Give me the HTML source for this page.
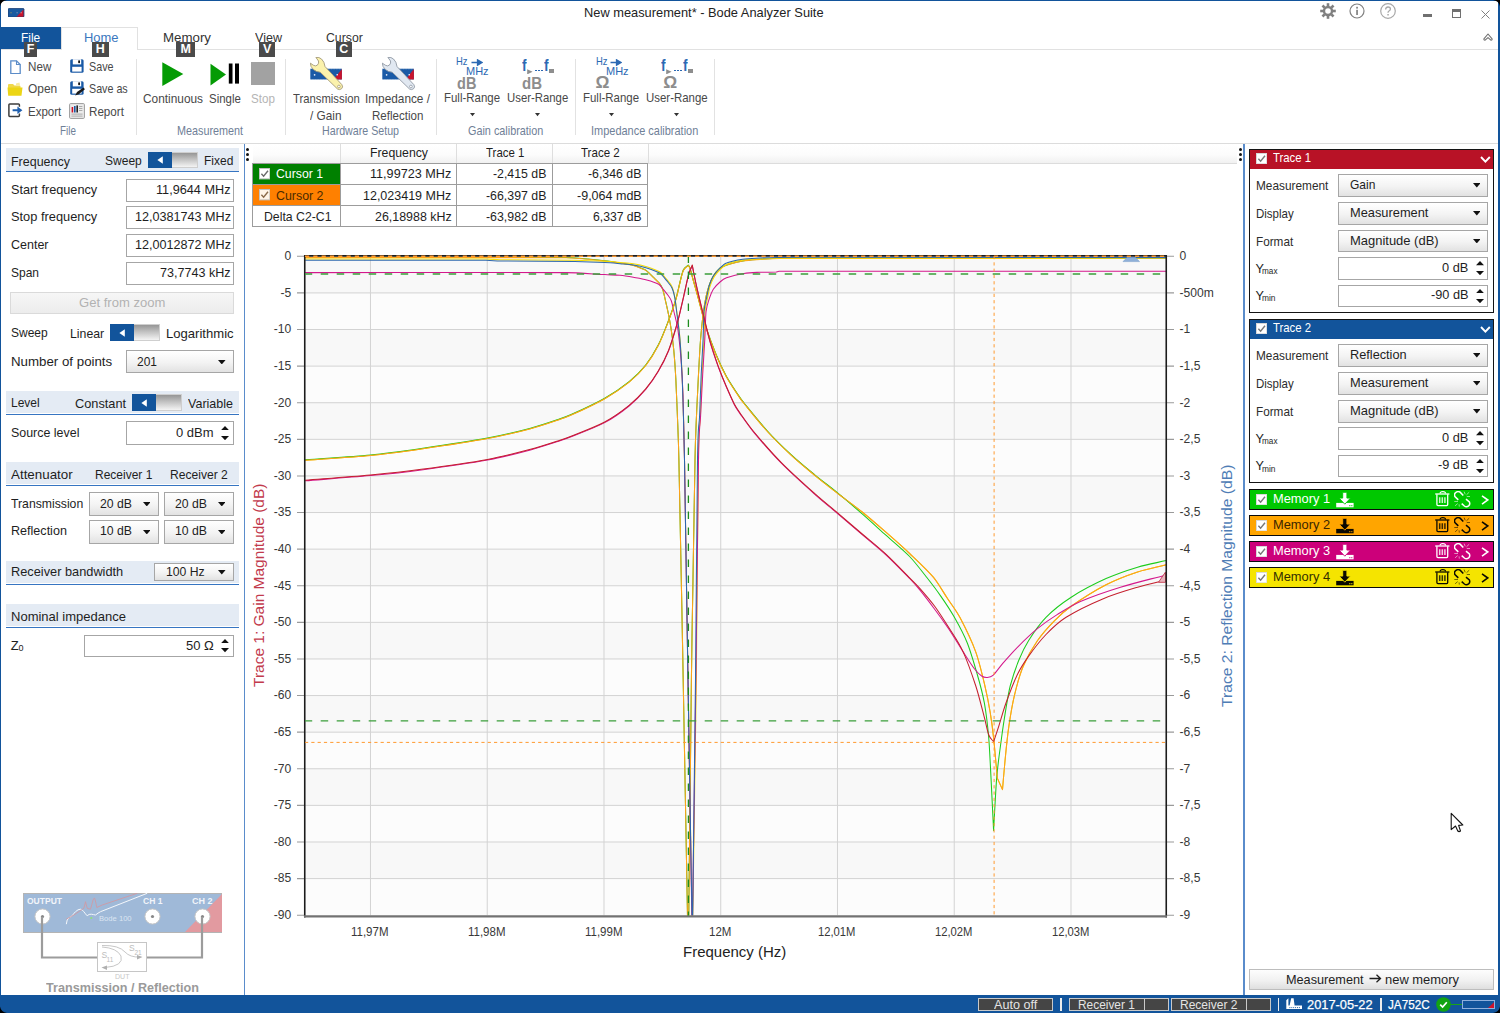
<!DOCTYPE html>
<html><head><meta charset="utf-8"><title>Bode Analyzer Suite</title><style>
html,body{margin:0;padding:0;background:#fff;}
body{width:1500px;height:1013px;position:relative;overflow:hidden;font-family:"Liberation Sans",sans-serif;}
.a{position:absolute;display:block;}
.t{position:absolute;white-space:nowrap;font-family:"Liberation Sans",sans-serif;}
</style></head>
<body>
<!-- p_top -->
<div class="t" style="left:584.40px;top:6.34px;font-size:13.30px;line-height:13.30px;color:#222;transform:scaleX(0.9647);transform-origin:0 0;">New measurement* - Bode Analyzer Suite</div>
<svg class="a" style="left:8.40px;top:7.70px;" width="16.2" height="9.5" viewBox="0 0 16 9"><rect width="16" height="9" rx="1" fill="#1a5aa0"/><path d="M8 9 L15.5 1 L15.5 8.5 Q15.5 9 15 9Z" fill="#c8142d"/><rect x="0.3" y="0.3" width="15.4" height="8.4" rx="1" fill="none" stroke="#1d3c6e" stroke-width="0.6"/><circle cx="3" cy="4.5" r="0.6" fill="#b9a24a"/><circle cx="9" cy="4.5" r="0.6" fill="#9fb0c8"/><circle cx="13" cy="4.5" r="0.6" fill="#e8c8c8"/></svg>
<svg class="a" style="left:1319.50px;top:3.00px;" width="16" height="16" viewBox="0 0 16 16"><g transform="translate(8,8)" fill="none" stroke="#808080"><circle r="4" stroke-width="2.4"/><rect x="-1.3" y="-7.8" width="2.6" height="3" fill="#808080" stroke="none" transform="rotate(0)"/><rect x="-1.3" y="-7.8" width="2.6" height="3" fill="#808080" stroke="none" transform="rotate(45)"/><rect x="-1.3" y="-7.8" width="2.6" height="3" fill="#808080" stroke="none" transform="rotate(90)"/><rect x="-1.3" y="-7.8" width="2.6" height="3" fill="#808080" stroke="none" transform="rotate(135)"/><rect x="-1.3" y="-7.8" width="2.6" height="3" fill="#808080" stroke="none" transform="rotate(180)"/><rect x="-1.3" y="-7.8" width="2.6" height="3" fill="#808080" stroke="none" transform="rotate(225)"/><rect x="-1.3" y="-7.8" width="2.6" height="3" fill="#808080" stroke="none" transform="rotate(270)"/><rect x="-1.3" y="-7.8" width="2.6" height="3" fill="#808080" stroke="none" transform="rotate(315)"/></g></svg>
<svg class="a" style="left:1349.00px;top:3.00px;" width="16" height="16" viewBox="0 0 16 16"><circle cx="8" cy="8" r="7" fill="none" stroke="#808080" stroke-width="1.2"/><rect x="7.2" y="6.8" width="1.7" height="5.2" fill="#808080"/><rect x="7.2" y="3.8" width="1.7" height="1.8" fill="#808080"/></svg>
<svg class="a" style="left:1379.60px;top:3.00px;" width="16" height="16" viewBox="0 0 16 16"><circle cx="8" cy="8" r="7.3" fill="none" stroke="#a8a8a8" stroke-width="1.2"/><path d="M5.6 6.4 Q5.6 4 8 4 Q10.4 4 10.4 6 Q10.4 7.3 9 8 Q8 8.6 8 9.8" fill="none" stroke="#a8a8a8" stroke-width="1.3"/><rect x="7.3" y="11" width="1.5" height="1.5" fill="#a8a8a8"/></svg>
<div class="a" style="left:1422.50px;top:14.20px;width:9.00px;height:2.40px;background:#707070;"></div>
<div class="a" style="left:1451.50px;top:8.50px;width:9.00px;height:9.00px;border:1px solid #707070;border-top:3px solid #707070;box-sizing:border-box;"></div>
<svg class="a" style="left:1481.00px;top:9.50px;" width="9" height="9" viewBox="0 0 9 9"><path d="M0.5 0.5 L8.5 8.5 M8.5 0.5 L0.5 8.5" stroke="#808080" stroke-width="1"/></svg>
<svg class="a" style="left:1483.00px;top:32.80px;" width="10" height="8.4" viewBox="0 0 10 8.4"><path d="M0.9 5.8 L5 1 L9.1 5.8 Q9.2 7.4 7.9 7.2 L5 4.6 L2.1 7.2 Q0.8 7.4 0.9 5.8Z" fill="#fff" stroke="#707070" stroke-width="1.1" stroke-linejoin="round"/></svg>
<div class="a" style="left:1.00px;top:48.60px;width:1498.00px;height:1.00px;background:#e1e1e1;"></div>
<div class="a" style="left:1.00px;top:26.60px;width:59.60px;height:22.90px;background:#12549b;"></div>
<div class="t" style="left:20.80px;top:30.84px;font-size:13.30px;line-height:13.30px;color:#fff;transform:scaleX(0.8960);transform-origin:0 0;">File</div>
<div class="a" style="left:61.30px;top:26.70px;width:77.00px;height:23.00px;background:#fff;border:1px solid #e1e1e1;border-bottom:none;box-sizing:border-box;"></div>
<div class="t" style="left:83.80px;top:30.84px;font-size:13.30px;line-height:13.30px;color:#3a77be;transform:scaleX(0.9725);transform-origin:0 0;">Home</div>
<div class="t" style="left:162.80px;top:30.84px;font-size:13.30px;line-height:13.30px;color:#333;transform:scaleX(0.9994);transform-origin:0 0;">Memory</div>
<div class="t" style="left:255.00px;top:30.84px;font-size:13.30px;line-height:13.30px;color:#333;transform:scaleX(0.9445);transform-origin:0 0;">View</div>
<div class="t" style="left:326.20px;top:30.84px;font-size:13.30px;line-height:13.30px;color:#333;transform:scaleX(0.9222);transform-origin:0 0;">Cursor</div>
<div class="a" style="left:23.70px;top:42.20px;width:13.80px;height:14.80px;background:#4a4a4a;"></div>
<div class="t" style="left:26.78px;top:43.42px;font-size:12.50px;line-height:12.50px;color:#fff;font-weight:bold;">F</div>
<div class="a" style="left:91.70px;top:42.20px;width:17.00px;height:14.80px;background:#4a4a4a;"></div>
<div class="t" style="left:95.69px;top:43.42px;font-size:12.50px;line-height:12.50px;color:#fff;font-weight:bold;">H</div>
<div class="a" style="left:176.20px;top:42.20px;width:19.10px;height:14.80px;background:#4a4a4a;"></div>
<div class="t" style="left:180.54px;top:43.42px;font-size:12.50px;line-height:12.50px;color:#fff;font-weight:bold;">M</div>
<div class="a" style="left:259.20px;top:42.20px;width:16.10px;height:14.80px;background:#4a4a4a;"></div>
<div class="t" style="left:263.08px;top:43.42px;font-size:12.50px;line-height:12.50px;color:#fff;font-weight:bold;">V</div>
<div class="a" style="left:335.80px;top:42.20px;width:15.90px;height:14.80px;background:#4a4a4a;"></div>
<div class="t" style="left:339.24px;top:43.42px;font-size:12.50px;line-height:12.50px;color:#fff;font-weight:bold;">C</div>
<div class="a" style="left:1.00px;top:142.60px;width:1498.00px;height:1.40px;background:#dcdcdc;"></div>
<div class="a" style="left:135.80px;top:59.00px;width:1.00px;height:76.00px;background:#e2e2e2;"></div>
<div class="a" style="left:284.80px;top:59.00px;width:1.00px;height:76.00px;background:#e2e2e2;"></div>
<div class="a" style="left:435.90px;top:59.00px;width:1.00px;height:76.00px;background:#e2e2e2;"></div>
<div class="a" style="left:574.90px;top:59.00px;width:1.00px;height:76.00px;background:#e2e2e2;"></div>
<div class="a" style="left:713.90px;top:59.00px;width:1.00px;height:76.00px;background:#e2e2e2;"></div>
<div class="t" style="left:28.00px;top:60.30px;font-size:13.00px;line-height:13.00px;color:#484848;transform:scaleX(0.8959);transform-origin:0 0;">New</div>
<div class="t" style="left:27.50px;top:82.30px;font-size:13.00px;line-height:13.00px;color:#484848;transform:scaleX(0.9183);transform-origin:0 0;">Open</div>
<div class="t" style="left:28.00px;top:104.50px;font-size:13.00px;line-height:13.00px;color:#484848;transform:scaleX(0.8863);transform-origin:0 0;">Export</div>
<div class="t" style="left:88.80px;top:60.30px;font-size:13.00px;line-height:13.00px;color:#484848;transform:scaleX(0.8269);transform-origin:0 0;">Save</div>
<div class="t" style="left:88.80px;top:82.30px;font-size:13.00px;line-height:13.00px;color:#484848;transform:scaleX(0.8239);transform-origin:0 0;">Save as</div>
<div class="t" style="left:88.80px;top:104.50px;font-size:13.00px;line-height:13.00px;color:#484848;transform:scaleX(0.8945);transform-origin:0 0;">Report</div>
<div class="t" style="left:60.30px;top:124.67px;font-size:12.20px;line-height:12.20px;color:#6f8097;transform:scaleX(0.8089);transform-origin:0 0;">File</div>
<div class="t" style="left:177.20px;top:124.67px;font-size:12.20px;line-height:12.20px;color:#6f8097;transform:scaleX(0.8863);transform-origin:0 0;">Measurement</div>
<div class="t" style="left:321.70px;top:124.67px;font-size:12.20px;line-height:12.20px;color:#6f8097;transform:scaleX(0.8746);transform-origin:0 0;">Hardware Setup</div>
<div class="t" style="left:467.60px;top:124.67px;font-size:12.20px;line-height:12.20px;color:#6f8097;transform:scaleX(0.8895);transform-origin:0 0;">Gain calibration</div>
<div class="t" style="left:590.60px;top:124.67px;font-size:12.20px;line-height:12.20px;color:#6f8097;transform:scaleX(0.8999);transform-origin:0 0;">Impedance calibration</div>
<svg class="a" style="left:10.00px;top:59.50px;" width="11" height="14.5" viewBox="0 0 11 14.5"><path d="M0.8 0.8 H6.5 L10.2 4.5 V13.7 H0.8Z" fill="#fff" stroke="#5b8cc8" stroke-width="1.3"/><path d="M6.5 0.8 V4.5 H10.2" fill="none" stroke="#5b8cc8" stroke-width="1.1"/></svg>
<svg class="a" style="left:7.00px;top:81.50px;" width="16" height="14.5" viewBox="0 0 16 14.5"><path d="M1 3 Q1 2 2 2 H6 L7.5 3.5 H12.5 Q13.5 3.5 13.5 4.5 V6 H1Z" fill="#f0d84a"/><path d="M9 1.5 L12.5 0.6 L13 3.5 H9Z" fill="#f7eaa0"/><path d="M0.5 5.5 H15.5 L14.5 13.8 H1.2Z" fill="#ecd515"/></svg>
<svg class="a" style="left:8.00px;top:103.40px;" width="15" height="15" viewBox="0 0 15 15"><path d="M11.4 3.8 V1.8 Q11.4 0.9 10.5 0.9 H1.8 Q0.9 0.9 0.9 1.8 V12.6 Q0.9 13.5 1.8 13.5 H10.5 Q11.4 13.5 11.4 12.6 V10.6" fill="none" stroke="#3c3c3c" stroke-width="1.5"/><path d="M4.6 6.2 H9.4 V3.4 L14.4 7.2 L9.4 11 V8.2 H4.6Z" fill="#1f5fae"/></svg>
<svg class="a" style="left:69.70px;top:59.40px;" width="15" height="15" viewBox="0 0 15 15"><rect x="0.2" y="0.2" width="13.4" height="13.6" rx="1.6" fill="#1a5aa6"/><rect x="2.8" y="0.2" width="8.4" height="5.2" fill="#fff"/><rect x="8.2" y="1.2" width="1.8" height="3" rx="0.8" fill="#111"/><rect x="2.2" y="7.8" width="9.4" height="4.8" fill="#fff"/></svg>
<svg class="a" style="left:69.70px;top:81.40px;" width="15" height="15" viewBox="0 0 15 15"><rect x="0.2" y="0.2" width="13.4" height="13.6" rx="1.6" fill="#1a5aa6"/><rect x="2.8" y="0.2" width="8.4" height="5.2" fill="#fff"/><rect x="8.2" y="1.2" width="1.8" height="3" rx="0.8" fill="#111"/><rect x="2.2" y="7.8" width="9.4" height="4.8" fill="#fff"/><path d="M5.2 14.6 L7 11 L13.6 6.6 L14.9 8.2 L8.8 13.2Z" fill="#1a1a1a"/></svg>
<svg class="a" style="left:68.70px;top:102.80px;" width="16" height="16" viewBox="0 0 16 16"><rect x="0.6" y="0.6" width="14.8" height="14.8" rx="1" fill="#ececec" stroke="#9a9a9a" stroke-width="1"/><rect x="2.6" y="4" width="1.6" height="5.5" fill="#d01025"/><rect x="5" y="3" width="1.6" height="6.5" fill="#1a5aa6"/><rect x="7.4" y="2.4" width="1.6" height="7.1" fill="#222"/><rect x="10" y="3" width="3.4" height="1" fill="#aaa"/><rect x="10" y="5" width="3.4" height="1" fill="#aaa"/><rect x="10" y="7" width="3.4" height="1" fill="#aaa"/><rect x="2.4" y="10.6" width="11.2" height="1" fill="#aaa"/><rect x="2.4" y="12.6" width="11.2" height="1" fill="#aaa"/></svg>
<svg class="a" style="left:162.00px;top:61.50px;" width="22" height="24.5" viewBox="0 0 22 24.5"><path d="M0.3 0.3 L21.3 12 L0.3 23.9Z" fill="#049b04"/></svg>
<svg class="a" style="left:210.00px;top:63.00px;" width="30" height="23" viewBox="0 0 30 23"><path d="M0.5 0.8 L16 11.5 L0.5 22.4Z" fill="#049b04"/><rect x="18.8" y="0.5" width="3.7" height="20.1" fill="#000"/><rect x="25" y="0.5" width="4" height="20.1" fill="#000"/></svg>
<div class="a" style="left:250.80px;top:61.80px;width:23.90px;height:23.50px;background:#a2a2a2;"></div>
<div class="t" style="left:143.00px;top:92.00px;font-size:13.00px;line-height:13.00px;color:#484848;transform:scaleX(0.9124);transform-origin:0 0;">Continuous</div>
<div class="t" style="left:208.70px;top:92.00px;font-size:13.00px;line-height:13.00px;color:#484848;transform:scaleX(0.8800);transform-origin:0 0;">Single</div>
<div class="t" style="left:250.80px;top:92.00px;font-size:13.00px;line-height:13.00px;color:#b4b4b4;transform:scaleX(0.8937);transform-origin:0 0;">Stop</div>
<svg class="a" style="left:309.70px;top:57.00px;" width="34" height="34" viewBox="0 0 34 34"><rect x="0.3" y="11.7" width="31.6" height="10.8" fill="#1a5aa6"/><path d="M31.9 12 V22.5 H23.6 Z" fill="#c8142d"/><path d="M0.3 11.9 H31.9" stroke="#fff" stroke-width="0.6" stroke-dasharray="0.8 0.8" opacity="0.55"/><path d="M0.3 22.4 H31.9" stroke="#fff" stroke-width="0.5" stroke-dasharray="0.8 0.8" opacity="0.45"/><circle cx="4.6" cy="17.8" r="0.85" fill="#e8eef8"/><circle cx="22.4" cy="17.5" r="0.6" fill="#8fb0dc"/><circle cx="27.2" cy="17.8" r="0.8" fill="#fff"/><path d="M5.9 0.4 Q9 -0.2 11.5 2 Q14.5 4.8 15 9.5 L31.9 27.7 Q33.5 30 31.5 31.8 Q29.5 33.3 27.5 32 L10.2 15.2 Q6 15 3.5 12.6 Q0.3 9.8 0.3 6.1 L3.3 8.2 Q5.5 9.6 7.3 8.2 Q9.3 6.2 8.5 4 Z" fill="#fbf2ac" stroke="#a49a78" stroke-width="0.9" stroke-linejoin="round"/><circle cx="28.9" cy="29.5" r="1.35" fill="#fff" stroke="#a49a78" stroke-width="0.8"/></svg>
<svg class="a" style="left:381.70px;top:57.00px;" width="34" height="34" viewBox="0 0 34 34"><rect x="0.3" y="11.7" width="31.6" height="10.8" fill="#1a5aa6"/><path d="M31.9 12 V22.5 H23.6 Z" fill="#c8142d"/><path d="M0.3 11.9 H31.9" stroke="#fff" stroke-width="0.6" stroke-dasharray="0.8 0.8" opacity="0.55"/><path d="M0.3 22.4 H31.9" stroke="#fff" stroke-width="0.5" stroke-dasharray="0.8 0.8" opacity="0.45"/><circle cx="4.6" cy="17.8" r="0.85" fill="#e8eef8"/><circle cx="22.4" cy="17.5" r="0.6" fill="#8fb0dc"/><circle cx="27.2" cy="17.8" r="0.8" fill="#fff"/><path d="M5.9 0.4 Q9 -0.2 11.5 2 Q14.5 4.8 15 9.5 L31.9 27.7 Q33.5 30 31.5 31.8 Q29.5 33.3 27.5 32 L10.2 15.2 Q6 15 3.5 12.6 Q0.3 9.8 0.3 6.1 L3.3 8.2 Q5.5 9.6 7.3 8.2 Q9.3 6.2 8.5 4 Z" fill="#e1e8f1" stroke="#9098a4" stroke-width="0.9" stroke-linejoin="round"/><circle cx="28.9" cy="29.5" r="1.35" fill="#fff" stroke="#9098a4" stroke-width="0.8"/></svg>
<div class="t" style="left:292.50px;top:92.00px;font-size:13.00px;line-height:13.00px;color:#484848;transform:scaleX(0.8684);transform-origin:0 0;">Transmission</div>
<div class="t" style="left:309.70px;top:108.50px;font-size:13.00px;line-height:13.00px;color:#484848;transform:scaleX(0.9083);transform-origin:0 0;">/ Gain</div>
<div class="t" style="left:365.00px;top:92.00px;font-size:13.00px;line-height:13.00px;color:#484848;transform:scaleX(0.9086);transform-origin:0 0;">Impedance /</div>
<div class="t" style="left:372.00px;top:108.50px;font-size:13.00px;line-height:13.00px;color:#484848;transform:scaleX(0.8875);transform-origin:0 0;">Reflection</div>
<div class="t" style="left:456.40px;top:56.11px;font-size:10.50px;line-height:10.50px;color:#2b69b3;transform:scaleX(0.8961);transform-origin:0 0;">Hz</div>
<div class="t" style="left:466.40px;top:66.11px;font-size:10.50px;line-height:10.50px;color:#2b69b3;transform:scaleX(1.0473);transform-origin:0 0;">MHz</div>
<svg class="a" style="left:470.90px;top:58.50px;" width="12" height="7" viewBox="0 0 12 7"><path d="M0.5 3.5 H8 M6.5 0.8 L11 3.5 L6.5 6.2Z" stroke="#2b69b3" stroke-width="1.3" fill="#2b69b3"/></svg>
<div class="t" style="left:595.60px;top:56.11px;font-size:10.50px;line-height:10.50px;color:#2b69b3;transform:scaleX(0.8961);transform-origin:0 0;">Hz</div>
<div class="t" style="left:605.60px;top:66.11px;font-size:10.50px;line-height:10.50px;color:#2b69b3;transform:scaleX(1.0473);transform-origin:0 0;">MHz</div>
<svg class="a" style="left:610.10px;top:58.50px;" width="12" height="7" viewBox="0 0 12 7"><path d="M0.5 3.5 H8 M6.5 0.8 L11 3.5 L6.5 6.2Z" stroke="#2b69b3" stroke-width="1.3" fill="#2b69b3"/></svg>
<div class="t" style="left:522.30px;top:57.11px;font-size:17.00px;line-height:17.00px;color:#2b69b3;transform:scaleX(0.8127);transform-origin:0 0;font-weight:bold;">f</div>
<div class="t" style="left:544.40px;top:57.11px;font-size:17.00px;line-height:17.00px;color:#2b69b3;transform:scaleX(0.8127);transform-origin:0 0;font-weight:bold;">f</div>
<svg class="a" style="left:526.70px;top:68.80px;" width="6" height="5.6" viewBox="0 0 6 5.6"><path d="M0.2 0.2 L5.6 2.8 L0.2 5.4Z" fill="#8e8e8e"/></svg>
<div class="a" style="left:534.90px;top:69.60px;width:1.80px;height:1.80px;background:#2b69b3;"></div>
<div class="a" style="left:537.90px;top:69.60px;width:1.80px;height:1.80px;background:#2b69b3;"></div>
<div class="a" style="left:540.90px;top:69.60px;width:1.80px;height:1.80px;background:#2b69b3;"></div>
<div class="a" style="left:549.40px;top:68.90px;width:4.40px;height:4.30px;background:#8e8e8e;"></div>
<div class="t" style="left:661.30px;top:57.11px;font-size:17.00px;line-height:17.00px;color:#2b69b3;transform:scaleX(0.8127);transform-origin:0 0;font-weight:bold;">f</div>
<div class="t" style="left:683.40px;top:57.11px;font-size:17.00px;line-height:17.00px;color:#2b69b3;transform:scaleX(0.8127);transform-origin:0 0;font-weight:bold;">f</div>
<svg class="a" style="left:665.70px;top:68.80px;" width="6" height="5.6" viewBox="0 0 6 5.6"><path d="M0.2 0.2 L5.6 2.8 L0.2 5.4Z" fill="#8e8e8e"/></svg>
<div class="a" style="left:673.90px;top:69.60px;width:1.80px;height:1.80px;background:#2b69b3;"></div>
<div class="a" style="left:676.90px;top:69.60px;width:1.80px;height:1.80px;background:#2b69b3;"></div>
<div class="a" style="left:679.90px;top:69.60px;width:1.80px;height:1.80px;background:#2b69b3;"></div>
<div class="a" style="left:688.40px;top:68.90px;width:4.40px;height:4.30px;background:#8e8e8e;"></div>
<div class="t" style="left:456.60px;top:75.66px;font-size:16.00px;line-height:16.00px;color:#8d8d8d;transform:scaleX(0.9096);transform-origin:0 0;font-weight:bold;">dB</div>
<div class="t" style="left:521.80px;top:75.66px;font-size:16.00px;line-height:16.00px;color:#8d8d8d;transform:scaleX(0.9378);transform-origin:0 0;font-weight:bold;">dB</div>
<div class="t" style="left:595.60px;top:74.27px;font-size:17.40px;line-height:17.40px;color:#8d8d8d;font-weight:bold;">Ω</div>
<div class="t" style="left:663.20px;top:74.27px;font-size:17.40px;line-height:17.40px;color:#8d8d8d;font-weight:bold;">Ω</div>
<div class="t" style="left:444.40px;top:91.40px;font-size:13.00px;line-height:13.00px;color:#484848;transform:scaleX(0.8808);transform-origin:0 0;">Full-Range</div>
<div class="t" style="left:507.40px;top:91.40px;font-size:13.00px;line-height:13.00px;color:#484848;transform:scaleX(0.8733);transform-origin:0 0;">User-Range</div>
<div class="t" style="left:583.40px;top:91.40px;font-size:13.00px;line-height:13.00px;color:#484848;transform:scaleX(0.8808);transform-origin:0 0;">Full-Range</div>
<div class="t" style="left:646.40px;top:91.40px;font-size:13.00px;line-height:13.00px;color:#484848;transform:scaleX(0.8790);transform-origin:0 0;">User-Range</div>
<svg class="a" style="left:469.70px;top:113.30px;" width="5" height="3.4" viewBox="0 0 5 3.4"><path d="M0 0 H5 L2.5 3.2Z" fill="#333"/></svg>
<svg class="a" style="left:535.00px;top:113.30px;" width="5" height="3.4" viewBox="0 0 5 3.4"><path d="M0 0 H5 L2.5 3.2Z" fill="#333"/></svg>
<svg class="a" style="left:609.00px;top:113.30px;" width="5" height="3.4" viewBox="0 0 5 3.4"><path d="M0 0 H5 L2.5 3.2Z" fill="#333"/></svg>
<svg class="a" style="left:674.00px;top:113.30px;" width="5" height="3.4" viewBox="0 0 5 3.4"><path d="M0 0 H5 L2.5 3.2Z" fill="#333"/></svg>
<!-- p_left -->
<div class="a" style="left:243.50px;top:143.50px;width:1.40px;height:852.00px;background:#5a8ccb;"></div>
<div class="a" style="left:5.50px;top:148.30px;width:233.20px;height:22.30px;background:#e4ebf4;"></div>
<div class="a" style="left:5.50px;top:170.60px;width:233.20px;height:1.30px;background:#3675c2;"></div>
<div class="t" style="left:10.80px;top:154.80px;font-size:13.00px;line-height:13.00px;color:#1e1e1e;transform:scaleX(0.9591);transform-origin:0 0;">Frequency</div>
<div class="t" style="left:104.50px;top:154.40px;font-size:13.00px;line-height:13.00px;color:#1e1e1e;transform:scaleX(0.9258);transform-origin:0 0;">Sweep</div>
<div class="a" style="left:147.80px;top:151.70px;width:50.00px;height:16.50px;background:linear-gradient(#969696,#bdbdbd 40%,#f4f4f4);border:1px solid #cfcfcf;box-sizing:border-box;"></div>
<div class="a" style="left:147.80px;top:151.70px;width:24.70px;height:16.50px;background:#12549b;"></div>
<svg class="a" style="left:157.20px;top:156.10px;" width="6.4" height="8" viewBox="0 0 6.4 8"><path d="M5.8 0.2 V7.8 L0.4 4Z" fill="#fff"/></svg>
<div class="t" style="left:204.00px;top:154.40px;font-size:13.00px;line-height:13.00px;color:#1e1e1e;transform:scaleX(0.9218);transform-origin:0 0;">Fixed</div>
<div class="a" style="left:125.80px;top:178.80px;width:108.00px;height:23.00px;background:#fff;border:1px solid #a6a6a6;box-sizing:border-box;"></div>
<div class="t" style="left:10.80px;top:182.70px;font-size:13.00px;line-height:13.00px;color:#1e1e1e;transform:scaleX(0.9779);transform-origin:0 0;">Start frequency</div>
<div class="t" style="left:156.00px;top:182.70px;font-size:13.00px;line-height:13.00px;color:#1e1e1e;transform:scaleX(0.9758);transform-origin:0 0;">11,9644 MHz</div>
<div class="a" style="left:125.80px;top:206.40px;width:108.00px;height:23.00px;background:#fff;border:1px solid #a6a6a6;box-sizing:border-box;"></div>
<div class="t" style="left:10.80px;top:210.30px;font-size:13.00px;line-height:13.00px;color:#1e1e1e;transform:scaleX(0.9858);transform-origin:0 0;">Stop frequency</div>
<div class="t" style="left:134.50px;top:210.30px;font-size:13.00px;line-height:13.00px;color:#1e1e1e;transform:scaleX(0.9697);transform-origin:0 0;">12,0381743 MHz</div>
<div class="a" style="left:125.80px;top:234.10px;width:108.00px;height:23.00px;background:#fff;border:1px solid #a6a6a6;box-sizing:border-box;"></div>
<div class="t" style="left:10.80px;top:238.00px;font-size:13.00px;line-height:13.00px;color:#1e1e1e;transform:scaleX(0.9611);transform-origin:0 0;">Center</div>
<div class="t" style="left:134.50px;top:238.00px;font-size:13.00px;line-height:13.00px;color:#1e1e1e;transform:scaleX(0.9697);transform-origin:0 0;">12,0012872 MHz</div>
<div class="a" style="left:125.80px;top:261.80px;width:108.00px;height:23.00px;background:#fff;border:1px solid #a6a6a6;box-sizing:border-box;"></div>
<div class="t" style="left:10.80px;top:265.70px;font-size:13.00px;line-height:13.00px;color:#1e1e1e;transform:scaleX(0.9223);transform-origin:0 0;">Span</div>
<div class="t" style="left:160.00px;top:265.70px;font-size:13.00px;line-height:13.00px;color:#1e1e1e;transform:scaleX(0.9659);transform-origin:0 0;">73,7743 kHz</div>
<div class="a" style="left:10.40px;top:292.00px;width:223.40px;height:21.80px;background:linear-gradient(#f6f6f6,#ececec);border:1px solid #dadada;box-sizing:border-box;"></div>
<div class="t" style="left:78.70px;top:296.30px;font-size:13.00px;line-height:13.00px;color:#b2b2b2;transform:scaleX(1.0039);transform-origin:0 0;">Get from zoom</div>
<div class="t" style="left:10.80px;top:326.00px;font-size:13.00px;line-height:13.00px;color:#1e1e1e;transform:scaleX(0.9233);transform-origin:0 0;">Sweep</div>
<div class="t" style="left:69.50px;top:326.60px;font-size:13.00px;line-height:13.00px;color:#1e1e1e;transform:scaleX(0.9465);transform-origin:0 0;">Linear</div>
<div class="a" style="left:109.50px;top:324.20px;width:50.00px;height:16.50px;background:linear-gradient(#969696,#bdbdbd 40%,#f4f4f4);border:1px solid #cfcfcf;box-sizing:border-box;"></div>
<div class="a" style="left:109.50px;top:324.20px;width:24.70px;height:16.50px;background:#12549b;"></div>
<svg class="a" style="left:118.90px;top:328.60px;" width="6.4" height="8" viewBox="0 0 6.4 8"><path d="M5.8 0.2 V7.8 L0.4 4Z" fill="#fff"/></svg>
<div class="t" style="left:166.20px;top:326.60px;font-size:13.00px;line-height:13.00px;color:#1e1e1e;transform:scaleX(1.0061);transform-origin:0 0;">Logarithmic</div>
<div class="t" style="left:10.80px;top:355.20px;font-size:13.00px;line-height:13.00px;color:#1e1e1e;transform:scaleX(1.0224);transform-origin:0 0;">Number of points</div>
<div class="a" style="left:125.80px;top:350.30px;width:108.00px;height:23.00px;background:linear-gradient(#ffffff,#f3f3f3 55%,#e2e2e2);border:1px solid #a6a6a6;box-sizing:border-box;"></div>
<div class="t" style="left:136.70px;top:355.20px;font-size:13.00px;line-height:13.00px;color:#1e1e1e;transform:scaleX(0.9222);transform-origin:0 0;">201</div>
<svg class="a" style="left:218.30px;top:359.60px;" width="7.6" height="4.6" viewBox="0 0 7.6 4.6"><path d="M0 0 H7.6 L3.8 4.4Z" fill="#111"/></svg>
<div class="a" style="left:5.50px;top:391.20px;width:233.20px;height:22.30px;background:#e4ebf4;"></div>
<div class="a" style="left:5.50px;top:413.50px;width:233.20px;height:1.30px;background:#3675c2;"></div>
<div class="t" style="left:10.80px;top:396.30px;font-size:13.00px;line-height:13.00px;color:#1e1e1e;transform:scaleX(0.9235);transform-origin:0 0;">Level</div>
<div class="t" style="left:74.70px;top:397.00px;font-size:13.00px;line-height:13.00px;color:#1e1e1e;transform:scaleX(0.9822);transform-origin:0 0;">Constant</div>
<div class="a" style="left:131.70px;top:394.20px;width:50.00px;height:16.50px;background:linear-gradient(#969696,#bdbdbd 40%,#f4f4f4);border:1px solid #cfcfcf;box-sizing:border-box;"></div>
<div class="a" style="left:131.70px;top:394.20px;width:24.70px;height:16.50px;background:#12549b;"></div>
<svg class="a" style="left:141.10px;top:398.60px;" width="6.4" height="8" viewBox="0 0 6.4 8"><path d="M5.8 0.2 V7.8 L0.4 4Z" fill="#fff"/></svg>
<div class="t" style="left:188.30px;top:397.00px;font-size:13.00px;line-height:13.00px;color:#1e1e1e;transform:scaleX(0.9630);transform-origin:0 0;">Variable</div>
<div class="t" style="left:10.80px;top:425.70px;font-size:13.00px;line-height:13.00px;color:#1e1e1e;transform:scaleX(0.9562);transform-origin:0 0;">Source level</div>
<div class="a" style="left:125.80px;top:421.30px;width:108.00px;height:23.40px;background:#fff;border:1px solid #a6a6a6;box-sizing:border-box;"></div>
<div class="t" style="left:175.80px;top:425.70px;font-size:13.00px;line-height:13.00px;color:#1e1e1e;transform:scaleX(0.9981);transform-origin:0 0;">0 dBm</div>
<svg class="a" style="left:220.80px;top:426.10px;" width="8" height="4.4" viewBox="0 0 8 4.4"><path d="M0 4.2 H8 L4 0Z" fill="#111"/></svg>
<svg class="a" style="left:220.80px;top:435.90px;" width="8" height="4.4" viewBox="0 0 8 4.4"><path d="M0 0 H8 L4 4.2Z" fill="#111"/></svg>
<div class="a" style="left:5.50px;top:462.20px;width:233.20px;height:22.30px;background:#e4ebf4;"></div>
<div class="a" style="left:5.50px;top:484.50px;width:233.20px;height:1.30px;background:#3675c2;"></div>
<div class="t" style="left:10.80px;top:467.50px;font-size:13.00px;line-height:13.00px;color:#1e1e1e;transform:scaleX(1.0287);transform-origin:0 0;">Attenuator</div>
<div class="t" style="left:94.70px;top:467.50px;font-size:13.00px;line-height:13.00px;color:#1e1e1e;transform:scaleX(0.9222);transform-origin:0 0;">Receiver 1</div>
<div class="t" style="left:169.70px;top:467.50px;font-size:13.00px;line-height:13.00px;color:#1e1e1e;transform:scaleX(0.9302);transform-origin:0 0;">Receiver 2</div>
<div class="t" style="left:10.80px;top:496.50px;font-size:13.00px;line-height:13.00px;color:#1e1e1e;transform:scaleX(0.9400);transform-origin:0 0;">Transmission</div>
<div class="t" style="left:10.80px;top:524.30px;font-size:13.00px;line-height:13.00px;color:#1e1e1e;transform:scaleX(0.9670);transform-origin:0 0;">Reflection</div>
<div class="a" style="left:88.70px;top:492.20px;width:70.00px;height:23.70px;background:linear-gradient(#ffffff,#f3f3f3 55%,#e2e2e2);border:1px solid #a6a6a6;box-sizing:border-box;"></div>
<div class="t" style="left:99.70px;top:496.50px;font-size:13.00px;line-height:13.00px;color:#1e1e1e;transform:scaleX(0.9420);transform-origin:0 0;">20 dB</div>
<svg class="a" style="left:142.80px;top:501.85px;" width="7.6" height="4.6" viewBox="0 0 7.6 4.6"><path d="M0 0 H7.6 L3.8 4.4Z" fill="#111"/></svg>
<div class="a" style="left:163.70px;top:492.20px;width:70.10px;height:23.70px;background:linear-gradient(#ffffff,#f3f3f3 55%,#e2e2e2);border:1px solid #a6a6a6;box-sizing:border-box;"></div>
<div class="t" style="left:174.70px;top:496.50px;font-size:13.00px;line-height:13.00px;color:#1e1e1e;transform:scaleX(0.9420);transform-origin:0 0;">20 dB</div>
<svg class="a" style="left:217.80px;top:501.85px;" width="7.6" height="4.6" viewBox="0 0 7.6 4.6"><path d="M0 0 H7.6 L3.8 4.4Z" fill="#111"/></svg>
<div class="a" style="left:88.70px;top:520.00px;width:70.00px;height:23.70px;background:linear-gradient(#ffffff,#f3f3f3 55%,#e2e2e2);border:1px solid #a6a6a6;box-sizing:border-box;"></div>
<div class="t" style="left:99.70px;top:524.30px;font-size:13.00px;line-height:13.00px;color:#1e1e1e;transform:scaleX(0.9420);transform-origin:0 0;">10 dB</div>
<svg class="a" style="left:142.80px;top:529.65px;" width="7.6" height="4.6" viewBox="0 0 7.6 4.6"><path d="M0 0 H7.6 L3.8 4.4Z" fill="#111"/></svg>
<div class="a" style="left:163.70px;top:520.00px;width:70.10px;height:23.70px;background:linear-gradient(#ffffff,#f3f3f3 55%,#e2e2e2);border:1px solid #a6a6a6;box-sizing:border-box;"></div>
<div class="t" style="left:174.70px;top:524.30px;font-size:13.00px;line-height:13.00px;color:#1e1e1e;transform:scaleX(0.9420);transform-origin:0 0;">10 dB</div>
<svg class="a" style="left:217.80px;top:529.65px;" width="7.6" height="4.6" viewBox="0 0 7.6 4.6"><path d="M0 0 H7.6 L3.8 4.4Z" fill="#111"/></svg>
<div class="a" style="left:5.50px;top:561.20px;width:233.20px;height:22.30px;background:#e4ebf4;"></div>
<div class="a" style="left:5.50px;top:583.50px;width:233.20px;height:1.30px;background:#3675c2;"></div>
<div class="t" style="left:10.80px;top:565.30px;font-size:13.00px;line-height:13.00px;color:#1e1e1e;transform:scaleX(0.9828);transform-origin:0 0;">Receiver bandwidth</div>
<div class="a" style="left:153.70px;top:563.30px;width:80.00px;height:18.00px;background:linear-gradient(#ffffff,#f3f3f3 55%,#e2e2e2);border:1px solid #a6a6a6;box-sizing:border-box;"></div>
<div class="t" style="left:165.50px;top:565.30px;font-size:13.00px;line-height:13.00px;color:#1e1e1e;transform:scaleX(0.9396);transform-origin:0 0;">100 Hz</div>
<svg class="a" style="left:218.30px;top:570.10px;" width="7.6" height="4.6" viewBox="0 0 7.6 4.6"><path d="M0 0 H7.6 L3.8 4.4Z" fill="#111"/></svg>
<div class="a" style="left:5.50px;top:604.20px;width:233.20px;height:22.30px;background:#e4ebf4;"></div>
<div class="a" style="left:5.50px;top:626.50px;width:233.20px;height:1.30px;background:#3675c2;"></div>
<div class="t" style="left:10.80px;top:609.50px;font-size:13.00px;line-height:13.00px;color:#1e1e1e;transform:scaleX(1.0010);transform-origin:0 0;">Nominal impedance</div>
<div class="a" style="left:83.70px;top:634.50px;width:150.00px;height:22.30px;background:#fff;border:1px solid #a6a6a6;box-sizing:border-box;"></div>
<div class="t" style="left:10.80px;top:639.00px;font-size:13.00px;line-height:13.00px;color:#1e1e1e;">Z</div>
<div class="t" style="left:18.60px;top:643.58px;font-size:9.00px;line-height:9.00px;color:#1e1e1e;">0</div>
<div class="t" style="left:185.50px;top:639.00px;font-size:13.00px;line-height:13.00px;color:#1e1e1e;transform:scaleX(1.0004);transform-origin:0 0;">50 Ω</div>
<svg class="a" style="left:220.80px;top:638.50px;" width="8" height="4.4" viewBox="0 0 8 4.4"><path d="M0 4.2 H8 L4 0Z" fill="#111"/></svg>
<svg class="a" style="left:220.80px;top:648.30px;" width="8" height="4.4" viewBox="0 0 8 4.4"><path d="M0 0 H8 L4 4.2Z" fill="#111"/></svg>
<div class="a" style="left:22.50px;top:893.00px;width:199.50px;height:39.50px;background:#9fb9d8;border:1px solid #b4b4b4;box-sizing:border-box;"></div>
<svg class="a" style="left:22.50px;top:893.00px;" width="200" height="40" viewBox="0 0 200 40"><path d="M199 1 V39 H162 Z" fill="#e29aa0"/><path d="M43.3 31.2 L44.2 27 Q46 24 49.2 22.8 Q51 20 52.5 18.7 Q55 16.2 57.5 16.2 Q59.5 16.8 60.8 18.7 Q62.5 21 64.2 22.8 Q66 20.8 68.3 21.2 Q70.5 21.6 72.5 22 Q75 20 77.5 18.7 L124.2 0.3" fill="none" stroke="#f4f7fb" stroke-width="1"/><path d="M43.3 26.2 L50.8 22 L60.8 15.3 Q61.8 12 62.5 8.7 Q63.4 12 64.2 15.3 L67.5 16.2 Q69 11 70 7 Q71 4.5 71.7 5.3 Q73 10 73.8 14.5 L79.2 12 L114.2 0.3" fill="none" stroke="#cf9aa4" stroke-width="0.9"/><circle cx="68.3" cy="25" r="1.1" fill="#8fe07a"/></svg>
<div class="t" style="left:26.50px;top:896.72px;font-size:8.60px;line-height:8.60px;color:#f2f5fa;transform:scaleX(0.9900);transform-origin:0 0;font-weight:bold;">OUTPUT</div>
<div class="t" style="left:142.50px;top:896.72px;font-size:8.60px;line-height:8.60px;color:#f2f5fa;transform:scaleX(0.9952);transform-origin:0 0;font-weight:bold;">CH 1</div>
<div class="t" style="left:192.00px;top:896.72px;font-size:8.60px;line-height:8.60px;color:#f2f5fa;transform:scaleX(1.0463);transform-origin:0 0;font-weight:bold;">CH 2</div>
<div class="t" style="left:99.00px;top:915.03px;font-size:8.00px;line-height:8.00px;color:#dbe5f2;transform:scaleX(0.9518);transform-origin:0 0;">Bode 100</div>
<svg class="a" style="left:33.50px;top:908.30px;" width="17" height="17" viewBox="0 0 17 17"><circle cx="8.5" cy="8.5" r="7.6" fill="#fff" stroke="#c4c4c4" stroke-width="1"/><circle cx="8.5" cy="8.5" r="1.6" fill="#888"/></svg>
<svg class="a" style="left:143.50px;top:908.30px;" width="17" height="17" viewBox="0 0 17 17"><circle cx="8.5" cy="8.5" r="7.6" fill="#fff" stroke="#c4c4c4" stroke-width="1"/><circle cx="8.5" cy="8.5" r="1.6" fill="#888"/></svg>
<svg class="a" style="left:193.50px;top:908.30px;" width="17" height="17" viewBox="0 0 17 17"><circle cx="8.5" cy="8.5" r="7.6" fill="#fff" stroke="#c4c4c4" stroke-width="1"/><circle cx="8.5" cy="8.5" r="1.6" fill="#888"/></svg>
<svg class="a" style="left:38.00px;top:914.00px;" width="170" height="48" viewBox="0 0 170 48"><path d="M4 3 V43.5 H59.5 M164 3 V43.5 H108.5" fill="none" stroke="#9c9c9c" stroke-width="2.2"/></svg>
<div class="a" style="left:97.30px;top:942.30px;width:49.60px;height:30.00px;background:#fff;border:1.2px solid #c6c6c6;box-sizing:border-box;"></div>
<svg class="a" style="left:97.30px;top:942.30px;" width="50" height="30" viewBox="0 0 50 30"><path d="M5 3.5 Q22 3 28 10 Q33 15.5 43 15 M5 5 Q20 6 24 14 Q27 24 8 25.5" fill="none" stroke="#c0c0c0" stroke-width="0.9"/><path d="M40 13 L45.5 15 L40 17.5Z M10 23.5 L4.5 25.5 L10 28Z" fill="#b0b0b0"/></svg>
<div class="t" style="left:101.50px;top:951.30px;font-size:8.50px;line-height:8.50px;color:#bcbcbc;">S</div>
<div class="t" style="left:106.50px;top:957.00px;font-size:6.50px;line-height:6.50px;color:#bcbcbc;">11</div>
<div class="t" style="left:129.00px;top:944.30px;font-size:8.50px;line-height:8.50px;color:#bcbcbc;">S</div>
<div class="t" style="left:134.50px;top:950.00px;font-size:6.50px;line-height:6.50px;color:#bcbcbc;">21</div>
<div class="t" style="left:115.00px;top:973.15px;font-size:7.50px;line-height:7.50px;color:#c8c8c8;transform:scaleX(0.9407);transform-origin:0 0;">DUT</div>
<div class="t" style="left:46.00px;top:980.50px;font-size:13.00px;line-height:13.00px;color:#9a9a9a;transform:scaleX(0.9716);transform-origin:0 0;font-weight:bold;">Transmission / Reflection</div>
<!-- p_mid -->
<div class="a" style="left:245.60px;top:147.70px;width:3.00px;height:3.00px;background:#111;border-radius:1.5px;"></div>
<div class="a" style="left:1239.10px;top:147.70px;width:3.00px;height:3.00px;background:#111;border-radius:1.5px;"></div>
<div class="a" style="left:245.60px;top:153.00px;width:3.00px;height:3.00px;background:#111;border-radius:1.5px;"></div>
<div class="a" style="left:1239.10px;top:153.00px;width:3.00px;height:3.00px;background:#111;border-radius:1.5px;"></div>
<div class="a" style="left:245.60px;top:158.20px;width:3.00px;height:3.00px;background:#111;border-radius:1.5px;"></div>
<div class="a" style="left:1239.10px;top:158.20px;width:3.00px;height:3.00px;background:#111;border-radius:1.5px;"></div>
<div class="a" style="left:252.50px;top:144.20px;width:984.00px;height:18.40px;background:linear-gradient(#ffffff,#fcfcfc 55%,#f1f1f1);border-bottom:1px solid #dcdcdc;"></div>
<div class="a" style="left:340.30px;top:144.20px;width:1.00px;height:19.00px;background:#dedede;"></div>
<div class="a" style="left:456.20px;top:144.20px;width:1.00px;height:19.00px;background:#dedede;"></div>
<div class="a" style="left:552.00px;top:144.20px;width:1.00px;height:19.00px;background:#dedede;"></div>
<div class="a" style="left:647.50px;top:144.20px;width:1.00px;height:19.00px;background:#dedede;"></div>
<div class="t" style="left:370.00px;top:145.60px;font-size:13.00px;line-height:13.00px;color:#1e1e1e;transform:scaleX(0.9444);transform-origin:0 0;">Frequency</div>
<div class="t" style="left:485.80px;top:145.60px;font-size:13.00px;line-height:13.00px;color:#1e1e1e;transform:scaleX(0.8810);transform-origin:0 0;">Trace 1</div>
<div class="t" style="left:581.30px;top:145.60px;font-size:13.00px;line-height:13.00px;color:#1e1e1e;transform:scaleX(0.8879);transform-origin:0 0;">Trace 2</div>
<div class="a" style="left:252.20px;top:163.30px;width:395.80px;height:63.80px;background:#fff;"></div>
<div class="a" style="left:252.70px;top:163.60px;width:88.00px;height:20.80px;background:#008000;"></div>
<div class="a" style="left:252.70px;top:184.60px;width:88.00px;height:20.80px;background:#ff8000;"></div>
<div class="a" style="left:252.20px;top:162.80px;width:395.80px;height:1.10px;background:#9c9c9c;"></div>
<div class="a" style="left:252.20px;top:183.80px;width:395.80px;height:1.10px;background:#9c9c9c;"></div>
<div class="a" style="left:252.20px;top:205.00px;width:395.80px;height:1.10px;background:#9c9c9c;"></div>
<div class="a" style="left:252.20px;top:226.10px;width:395.80px;height:1.10px;background:#9c9c9c;"></div>
<div class="a" style="left:251.70px;top:163.30px;width:1.10px;height:63.80px;background:#9c9c9c;"></div>
<div class="a" style="left:340.00px;top:163.30px;width:1.10px;height:63.80px;background:#9c9c9c;"></div>
<div class="a" style="left:456.20px;top:163.30px;width:1.10px;height:63.80px;background:#9c9c9c;"></div>
<div class="a" style="left:552.00px;top:163.30px;width:1.10px;height:63.80px;background:#9c9c9c;"></div>
<div class="a" style="left:647.10px;top:163.30px;width:1.10px;height:63.80px;background:#9c9c9c;"></div>
<svg class="a" style="left:258.90px;top:168.20px;" width="11.4" height="11.4" viewBox="0 0 11.4 11.4"><rect x="0.5" y="0.5" width="10.4" height="10.4" fill="#fff" stroke="#c0c0c0" stroke-width="1"/><path d="M2.4 5.8 L4.6 8.2 L9 2.8" fill="none" stroke="#6a6a6a" stroke-width="1.4"/></svg>
<svg class="a" style="left:258.90px;top:189.30px;" width="11.4" height="11.4" viewBox="0 0 11.4 11.4"><rect x="0.5" y="0.5" width="10.4" height="10.4" fill="#fff4e6" stroke="#c0c0c0" stroke-width="1"/><path d="M2.4 5.8 L4.6 8.2 L9 2.8" fill="none" stroke="#8a6a4a" stroke-width="1.4"/></svg>
<div class="t" style="left:275.80px;top:167.40px;font-size:13.00px;line-height:13.00px;color:#fff;transform:scaleX(0.9429);transform-origin:0 0;">Cursor 1</div>
<div class="t" style="left:275.80px;top:188.60px;font-size:13.00px;line-height:13.00px;color:#4a2a00;transform:scaleX(0.9530);transform-origin:0 0;">Cursor 2</div>
<div class="t" style="left:264.20px;top:210.20px;font-size:13.00px;line-height:13.00px;color:#1e1e1e;transform:scaleX(0.9438);transform-origin:0 0;">Delta C2-C1</div>
<div class="t" style="left:370.00px;top:167.40px;font-size:13.00px;line-height:13.00px;color:#1e1e1e;transform:scaleX(0.9715);transform-origin:0 0;">11,99723 MHz</div>
<div class="t" style="left:492.80px;top:167.40px;font-size:13.00px;line-height:13.00px;color:#1e1e1e;transform:scaleX(0.9473);transform-origin:0 0;">-2,415 dB</div>
<div class="t" style="left:588.30px;top:167.40px;font-size:13.00px;line-height:13.00px;color:#1e1e1e;transform:scaleX(0.9473);transform-origin:0 0;">-6,346 dB</div>
<div class="t" style="left:363.00px;top:188.60px;font-size:13.00px;line-height:13.00px;color:#1e1e1e;transform:scaleX(0.9611);transform-origin:0 0;">12,023419 MHz</div>
<div class="t" style="left:485.80px;top:188.60px;font-size:13.00px;line-height:13.00px;color:#1e1e1e;transform:scaleX(0.9497);transform-origin:0 0;">-66,397 dB</div>
<div class="t" style="left:577.00px;top:188.60px;font-size:13.00px;line-height:13.00px;color:#1e1e1e;transform:scaleX(0.9628);transform-origin:0 0;">-9,064 mdB</div>
<div class="t" style="left:374.50px;top:210.20px;font-size:13.00px;line-height:13.00px;color:#1e1e1e;transform:scaleX(0.9562);transform-origin:0 0;">26,18988 kHz</div>
<div class="t" style="left:485.80px;top:210.20px;font-size:13.00px;line-height:13.00px;color:#1e1e1e;transform:scaleX(0.9497);transform-origin:0 0;">-63,982 dB</div>
<div class="t" style="left:593.00px;top:210.20px;font-size:13.00px;line-height:13.00px;color:#1e1e1e;transform:scaleX(0.9358);transform-origin:0 0;">6,337 dB</div>
<!-- p_chart -->
<svg class="a" style="left:0;top:0" width="1500" height="1013" viewBox="0 0 1500 1013"><rect x="305.1" y="256.3" width="861.3" height="658.9" fill="#fcfcfc"/><rect x="305.1" y="256.30" width="861.3" height="36.61" fill="#f8f8f8"/><rect x="305.1" y="329.51" width="861.3" height="36.61" fill="#f8f8f8"/><rect x="305.1" y="402.72" width="861.3" height="36.61" fill="#f8f8f8"/><rect x="305.1" y="475.93" width="861.3" height="36.61" fill="#f8f8f8"/><rect x="305.1" y="549.14" width="861.3" height="36.61" fill="#f8f8f8"/><rect x="305.1" y="622.36" width="861.3" height="36.61" fill="#f8f8f8"/><rect x="305.1" y="695.57" width="861.3" height="36.61" fill="#f8f8f8"/><rect x="305.1" y="768.78" width="861.3" height="36.61" fill="#f8f8f8"/><rect x="305.1" y="841.99" width="861.3" height="36.61" fill="#f8f8f8"/><path d="M305.1 292.91 H1166.4" stroke="#d3d3d3" stroke-width="1"/><path d="M305.1 329.51 H1166.4" stroke="#d3d3d3" stroke-width="1"/><path d="M305.1 366.12 H1166.4" stroke="#d3d3d3" stroke-width="1"/><path d="M305.1 402.72 H1166.4" stroke="#d3d3d3" stroke-width="1"/><path d="M305.1 439.33 H1166.4" stroke="#d3d3d3" stroke-width="1"/><path d="M305.1 475.93 H1166.4" stroke="#d3d3d3" stroke-width="1"/><path d="M305.1 512.54 H1166.4" stroke="#d3d3d3" stroke-width="1"/><path d="M305.1 549.14 H1166.4" stroke="#d3d3d3" stroke-width="1"/><path d="M305.1 585.75 H1166.4" stroke="#d3d3d3" stroke-width="1"/><path d="M305.1 622.36 H1166.4" stroke="#d3d3d3" stroke-width="1"/><path d="M305.1 658.96 H1166.4" stroke="#d3d3d3" stroke-width="1"/><path d="M305.1 695.57 H1166.4" stroke="#d3d3d3" stroke-width="1"/><path d="M305.1 732.17 H1166.4" stroke="#d3d3d3" stroke-width="1"/><path d="M305.1 768.78 H1166.4" stroke="#d3d3d3" stroke-width="1"/><path d="M305.1 805.38 H1166.4" stroke="#d3d3d3" stroke-width="1"/><path d="M305.1 841.99 H1166.4" stroke="#d3d3d3" stroke-width="1"/><path d="M305.1 878.59 H1166.4" stroke="#d3d3d3" stroke-width="1"/><path d="M370.48 256.3 V915.2" stroke="#d3d3d3" stroke-width="1"/><path d="M487.23 256.3 V915.2" stroke="#d3d3d3" stroke-width="1"/><path d="M603.97 256.3 V915.2" stroke="#d3d3d3" stroke-width="1"/><path d="M720.72 256.3 V915.2" stroke="#d3d3d3" stroke-width="1"/><path d="M837.47 256.3 V915.2" stroke="#d3d3d3" stroke-width="1"/><path d="M954.22 256.3 V915.2" stroke="#d3d3d3" stroke-width="1"/><path d="M1070.97 256.3 V915.2" stroke="#d3d3d3" stroke-width="1"/><path d="M297 256.30 H304.5 M1166.5 256.30 H1174" stroke="#9a9a9a" stroke-width="1.1"/><path d="M297 292.91 H304.5 M1166.5 292.91 H1174" stroke="#9a9a9a" stroke-width="1.1"/><path d="M297 329.51 H304.5 M1166.5 329.51 H1174" stroke="#9a9a9a" stroke-width="1.1"/><path d="M297 366.12 H304.5 M1166.5 366.12 H1174" stroke="#9a9a9a" stroke-width="1.1"/><path d="M297 402.72 H304.5 M1166.5 402.72 H1174" stroke="#9a9a9a" stroke-width="1.1"/><path d="M297 439.33 H304.5 M1166.5 439.33 H1174" stroke="#9a9a9a" stroke-width="1.1"/><path d="M297 475.93 H304.5 M1166.5 475.93 H1174" stroke="#9a9a9a" stroke-width="1.1"/><path d="M297 512.54 H304.5 M1166.5 512.54 H1174" stroke="#9a9a9a" stroke-width="1.1"/><path d="M297 549.14 H304.5 M1166.5 549.14 H1174" stroke="#9a9a9a" stroke-width="1.1"/><path d="M297 585.75 H304.5 M1166.5 585.75 H1174" stroke="#9a9a9a" stroke-width="1.1"/><path d="M297 622.36 H304.5 M1166.5 622.36 H1174" stroke="#9a9a9a" stroke-width="1.1"/><path d="M297 658.96 H304.5 M1166.5 658.96 H1174" stroke="#9a9a9a" stroke-width="1.1"/><path d="M297 695.57 H304.5 M1166.5 695.57 H1174" stroke="#9a9a9a" stroke-width="1.1"/><path d="M297 732.17 H304.5 M1166.5 732.17 H1174" stroke="#9a9a9a" stroke-width="1.1"/><path d="M297 768.78 H304.5 M1166.5 768.78 H1174" stroke="#9a9a9a" stroke-width="1.1"/><path d="M297 805.38 H304.5 M1166.5 805.38 H1174" stroke="#9a9a9a" stroke-width="1.1"/><path d="M297 841.99 H304.5 M1166.5 841.99 H1174" stroke="#9a9a9a" stroke-width="1.1"/><path d="M297 878.59 H304.5 M1166.5 878.59 H1174" stroke="#9a9a9a" stroke-width="1.1"/><path d="M297 915.20 H304.5 M1166.5 915.20 H1174" stroke="#9a9a9a" stroke-width="1.1"/><clipPath id="pc"><rect x="304.6" y="255.3" width="862.3" height="660.1"/></clipPath><g clip-path="url(#pc)" fill="none" stroke-width="1.05" stroke-linejoin="round"><path d="M305.2 257.4C392.1 257.4 516.1 256.9 566.0 257.5C578.9 257.6 595.7 259.8 604.7 260.7C609.8 261.2 615.2 262.1 620.0 262.9C624.4 263.6 629.2 264.1 633.3 265.2C637.1 266.2 642.1 268.4 644.7 269.6C646.0 270.2 647.4 271.4 648.7 272.6C650.1 273.9 651.8 275.7 653.3 277.2C655.1 279.0 657.7 281.2 659.3 283.2C660.4 284.6 661.7 286.4 662.7 289.2C663.6 291.6 664.4 296.2 665.3 299.9C666.2 303.7 667.1 307.5 668.0 311.9C668.9 316.4 669.9 320.8 670.8 326.9C671.8 333.1 672.9 340.8 673.7 349.4C674.4 356.6 675.2 367.3 675.8 378.4C676.3 388.0 676.9 402.1 677.4 415.7C677.9 428.8 678.4 437.1 678.9 459.9C679.9 503.9 681.8 603.7 683.2 679.9C684.8 763.2 686.6 866.6 688.3 959.9C689.3 866.6 690.4 757.0 691.4 679.9C692.5 596.6 694.1 503.9 695.0 459.9C695.5 434.0 696.0 427.9 696.5 415.7C697.1 401.4 697.8 386.8 698.5 374.3C699.2 361.5 699.9 347.7 700.6 339.0C701.5 328.3 702.7 317.0 703.7 310.0C704.9 301.7 706.5 294.0 707.9 289.3C709.6 283.4 712.0 278.0 714.1 274.8C716.5 271.0 719.6 268.0 722.4 266.7C727.2 264.4 736.4 262.1 742.7 260.9C748.5 259.7 754.2 259.6 760.0 259.2C766.2 258.8 773.3 258.3 780.0 258.3C847.7 258.1 1037.5 258.2 1166.3 258.1" stroke="#18c818"/><path d="M305.2 257.6C392.1 257.6 516.1 257.2 566.0 257.7C578.9 257.8 595.7 260.0 604.7 260.9C609.8 261.4 615.2 262.4 620.0 263.1C624.4 263.8 629.2 264.3 633.3 265.4C637.1 266.4 642.1 268.6 644.7 269.8C646.0 270.4 647.4 271.6 648.7 272.8C650.1 274.1 651.8 275.9 653.3 277.4C655.1 279.2 657.7 281.4 659.3 283.4C660.4 284.8 661.7 286.6 662.7 289.4C663.6 291.8 664.4 296.4 665.3 300.1C666.2 303.9 667.1 307.7 668.0 312.1C668.9 316.6 669.9 321.0 670.8 327.1C671.8 333.4 672.9 341.0 673.7 349.6C674.4 356.8 675.2 367.6 675.8 378.6C676.3 388.2 676.9 402.3 677.4 415.9C677.9 429.0 678.4 437.3 678.9 460.1C679.9 504.1 681.8 603.9 683.2 680.1C684.8 763.4 686.6 866.8 688.3 960.1C689.3 866.8 690.4 757.2 691.4 680.1C692.5 596.8 694.1 504.1 695.0 460.1C695.5 434.2 696.0 428.1 696.5 415.9C697.1 401.6 697.8 387.0 698.5 374.5C699.2 361.7 699.9 347.9 700.6 339.2C701.5 328.5 702.7 317.2 703.7 310.2C704.9 301.9 706.5 294.2 707.9 289.5C709.6 283.6 712.0 278.2 714.1 275.0C716.5 271.2 719.6 268.2 722.4 266.9C727.2 264.6 736.4 262.4 742.7 261.1C748.5 259.9 754.2 259.8 760.0 259.4C766.2 259.0 773.3 258.5 780.0 258.5C847.7 258.3 1037.5 258.4 1166.3 258.3" stroke="#ffa21a"/><path d="M305.2 259.0C365.5 259.0 453.5 258.9 486.0 259.0C490.7 259.0 495.3 259.6 500.0 259.7C514.8 259.9 557.2 259.9 574.7 260.2C584.7 260.4 597.2 260.9 604.7 261.3C609.8 261.5 615.2 262.0 620.0 262.4C624.4 262.8 628.9 263.0 633.3 263.7C637.8 264.4 642.2 265.3 646.7 266.7C651.1 268.1 656.7 269.9 660.0 272.0C662.2 273.4 664.7 276.9 666.7 279.4C668.5 281.6 670.7 283.9 672.0 286.7C672.9 288.6 673.9 292.0 674.7 296.0C675.4 299.4 676.0 305.3 676.7 310.7C677.6 317.7 679.0 327.4 679.9 337.8C680.6 346.0 681.4 360.3 682.0 373.1C682.5 383.3 683.0 400.2 683.4 414.5C683.8 427.1 684.1 437.6 684.5 458.7C685.3 502.7 686.8 607.8 688.0 678.7C689.3 758.7 690.9 852.0 692.4 938.7C693.7 852.8 695.3 760.5 696.3 680.9C697.0 626.9 697.6 503.9 698.3 460.9C699.0 416.9 699.8 431.0 700.4 416.7C700.9 404.4 701.5 387.0 702.0 375.3C702.6 362.5 703.4 350.4 703.9 340.0C704.2 333.3 704.5 316.4 704.8 312.9C705.4 305.9 706.6 302.6 707.5 298.2C708.4 293.8 709.2 289.0 710.1 286.2C711.2 282.6 712.8 279.1 714.1 276.9C715.9 274.0 718.6 271.1 720.8 268.9C723.0 266.8 725.1 264.7 727.3 263.9C731.1 262.4 738.1 260.9 743.5 260.1C749.1 259.3 755.0 259.2 760.8 258.9C766.6 258.6 772.3 258.4 778.1 258.3C788.1 258.2 806.6 258.1 820.8 258.1C885.6 258.1 1051.7 258.4 1167.1 258.5" stroke="#f5dc00"/><path d="M305.2 272.6C392.1 272.6 516.1 272.3 566.0 272.6C578.9 272.7 595.7 274.2 604.7 274.6C609.8 274.9 615.2 274.9 620.0 275.3C624.4 275.7 628.9 276.5 633.3 277.3C637.8 278.1 642.5 278.8 646.7 280.0C650.7 281.1 655.9 282.8 658.7 284.3C660.2 285.2 661.8 287.5 663.3 289.3C664.8 291.1 666.7 293.4 668.0 295.3C669.1 296.9 670.3 297.9 671.3 300.7C672.2 303.2 673.1 308.1 674.0 312.0C675.1 316.7 676.6 321.2 677.8 328.8C678.8 335.7 680.0 346.8 680.9 357.8C681.6 366.7 682.4 378.1 683.0 395.1C683.5 409.3 684.0 431.5 684.5 460.0C685.3 507.5 686.8 607.3 688.0 680.0C689.3 760.0 690.8 853.3 692.2 940.0C693.4 853.3 694.9 760.0 695.9 680.0C696.8 614.0 697.7 504.0 698.5 460.0C699.2 420.7 699.9 430.1 700.6 415.8C701.3 401.5 702.0 387.2 702.7 374.4C703.4 361.6 704.2 349.5 704.8 339.1C705.2 331.5 705.6 315.6 706.0 312.0C706.8 305.3 708.2 302.1 709.3 298.7C710.5 294.9 712.0 291.4 713.3 289.3C715.1 286.5 717.8 283.9 720.0 282.0C722.2 280.1 724.3 278.6 726.5 277.8C730.5 276.4 738.4 274.3 744.0 273.4C749.3 272.5 754.7 272.5 760.0 272.3C765.3 272.1 772.8 272.2 776.0 272.0C777.0 271.9 778.0 271.3 779.0 271.3C844.0 271.2 1037.2 271.3 1166.3 271.3" stroke="#d4188c"/><path d="M305.2 460.2C327.0 458.6 351.1 457.3 370.5 455.4C387.4 453.8 404.4 451.4 421.3 449.0C440.8 446.2 469.3 442.0 487.5 438.6C501.8 435.9 518.4 431.9 530.5 428.7C540.3 426.1 553.2 421.6 560.0 419.3C563.7 418.1 567.4 416.8 571.1 415.1C578.6 411.7 595.0 404.2 604.7 398.7C612.8 394.1 622.3 387.6 629.1 382.1C634.6 377.6 640.9 371.6 645.7 365.5C649.8 360.3 654.3 353.2 658.1 345.8C661.6 339.0 665.5 328.8 668.5 321.0C671.0 314.5 674.1 305.6 676.0 299.2C677.3 294.7 678.8 287.3 680.0 282.5C681.1 278.2 682.2 272.8 683.3 270.5C684.7 267.7 686.6 267.2 688.3 265.5C688.9 266.5 689.4 266.8 690.0 268.5C690.8 271.0 692.2 276.6 693.3 280.5C694.4 284.5 695.6 288.3 696.7 292.5C698.2 297.8 700.5 306.7 702.0 312.5C703.3 317.3 704.5 323.4 705.8 327.2C708.2 334.3 712.8 346.9 716.2 355.2C719.6 363.4 723.1 370.7 726.5 376.9C730.5 384.0 737.1 393.8 740.0 398.1C741.2 400.0 742.5 401.5 743.7 403.0C748.3 408.6 759.5 422.8 767.4 431.5C775.3 440.2 783.2 447.8 791.1 455.1C799.0 462.4 807.1 469.0 814.8 475.3C822.3 481.5 829.8 487.3 837.3 493.1C845.2 499.2 854.1 505.5 862.2 512.0C870.1 518.4 878.0 525.3 885.9 532.2C893.8 539.1 901.7 546.0 909.6 553.5C917.5 561.0 927.0 569.7 933.3 577.2C938.0 582.8 943.0 591.7 947.5 598.5C951.7 604.9 955.9 609.8 960.1 617.8C964.8 626.7 971.8 641.1 975.8 652.1C978.7 659.9 982.0 673.6 984.4 683.6C986.3 691.7 988.7 703.2 990.2 712.3C991.3 719.0 992.5 727.5 993.6 738.0C994.8 749.0 996.1 764.7 997.3 778.1L1002.5 789.6C1003.3 780.1 1004.2 769.3 1005.0 761.0C1006.0 750.5 1007.5 735.4 1008.8 726.6C1010.4 715.6 1012.6 703.1 1014.5 695.1C1016.9 685.1 1020.2 673.3 1023.1 666.5C1026.9 657.4 1032.6 647.6 1037.4 640.7C1042.7 633.1 1049.0 626.3 1054.6 620.6C1060.1 615.0 1065.7 610.1 1071.2 606.3C1079.8 600.3 1095.0 590.5 1106.1 584.8C1116.6 579.4 1127.6 575.3 1137.6 572.0C1147.2 568.8 1156.7 567.2 1166.3 564.8" stroke="#e6cf00"/><path d="M305.2 459.7C327.0 458.1 351.1 456.8 370.5 454.9C387.4 453.3 404.4 450.9 421.3 448.5C440.8 445.7 469.3 441.5 487.5 438.1C501.8 435.4 518.4 431.4 530.5 428.2C540.3 425.6 553.2 421.1 560.0 418.8C563.7 417.6 567.4 416.3 571.1 414.6C578.6 411.2 595.0 403.7 604.7 398.2C612.8 393.6 622.3 387.1 629.1 381.6C634.6 377.1 640.9 371.1 645.7 365.0C649.8 359.8 654.3 352.7 658.1 345.3C661.6 338.5 665.5 328.3 668.5 320.5C671.0 314.0 674.1 305.1 676.0 298.7C677.3 294.2 678.8 286.8 680.0 282.0C681.1 277.7 682.2 272.3 683.3 270.0C684.7 267.2 686.6 266.7 688.3 265.0C688.9 266.0 689.4 266.3 690.0 268.0C690.8 270.5 692.2 276.1 693.3 280.0C694.4 284.0 695.6 287.8 696.7 292.0C698.2 297.3 700.5 306.2 702.0 312.0C703.3 316.8 704.5 322.9 705.8 326.7C708.2 333.8 712.8 346.4 716.2 354.7C719.6 362.9 723.1 370.2 726.5 376.4C730.5 383.5 737.1 393.2 740.0 397.6C741.2 399.5 742.5 401.0 743.7 402.5C748.3 408.1 759.5 422.3 767.4 431.0C775.3 439.7 783.2 447.3 791.1 454.6C799.0 461.9 807.1 468.5 814.8 474.8C822.3 481.0 829.8 486.4 837.3 492.6C845.2 499.1 854.1 506.8 862.2 513.9C870.1 520.8 878.0 528.1 885.9 535.2C893.8 542.3 902.9 549.6 909.6 556.5C915.1 562.2 921.1 570.2 926.2 576.7C930.9 582.7 935.7 588.8 940.4 595.6C945.1 602.3 949.9 609.4 954.4 617.3C958.7 624.9 963.5 633.5 967.3 643.0C970.6 651.3 974.4 664.5 977.3 674.5C979.7 682.8 982.5 692.7 984.4 703.2C985.8 711.1 987.6 725.1 988.7 737.5C989.5 746.1 990.2 763.0 991.0 777.6C991.8 793.1 992.7 812.9 993.6 830.6C994.6 812.9 995.7 789.6 996.7 777.6C998.0 762.1 1000.1 749.0 1001.6 737.5C1003.0 726.8 1004.5 717.5 1005.9 708.9C1007.3 700.3 1008.8 691.4 1010.2 686.0C1012.4 677.9 1015.9 667.3 1018.8 660.2C1021.9 652.6 1025.5 645.5 1028.8 640.2C1033.3 633.1 1040.3 623.1 1046.0 617.3C1053.1 610.1 1062.8 602.6 1071.2 597.2C1081.2 590.8 1095.0 583.6 1106.1 578.6C1116.6 573.9 1127.6 570.2 1137.6 567.2C1147.2 564.3 1156.7 562.8 1166.3 560.6" stroke="#1ccc1c"/><path d="M305.2 460.2C327.0 458.6 351.1 457.3 370.5 455.4C387.4 453.8 404.4 451.4 421.3 449.0C440.8 446.2 469.3 442.0 487.5 438.6C501.8 435.9 518.4 431.9 530.5 428.7C540.3 426.1 553.2 421.6 560.0 419.3C563.7 418.1 567.4 416.8 571.1 415.1C578.6 411.7 595.0 404.2 604.7 398.7C612.8 394.1 622.3 387.6 629.1 382.1C634.6 377.6 640.9 371.6 645.7 365.5C649.8 360.3 654.3 353.2 658.1 345.8C661.6 339.0 665.5 328.8 668.5 321.0C671.0 314.5 674.1 305.6 676.0 299.2C677.3 294.7 678.8 287.3 680.0 282.5C681.1 278.2 682.2 272.8 683.3 270.5C684.7 267.7 686.6 267.2 688.3 265.5C688.9 266.5 689.4 266.8 690.0 268.5C690.8 271.0 692.2 276.6 693.3 280.5C694.4 284.5 695.6 288.3 696.7 292.5C698.2 297.8 700.5 306.7 702.0 312.5C703.3 317.3 704.5 323.4 705.8 327.2C708.2 334.3 712.8 346.9 716.2 355.2C719.6 363.4 723.1 370.7 726.5 376.9C730.5 384.0 737.1 393.8 740.0 398.1C741.2 400.0 742.5 401.5 743.7 403.0C748.3 408.6 759.5 422.8 767.4 431.5C775.3 440.2 783.2 447.8 791.1 455.1C799.0 462.4 807.1 469.0 814.8 475.3C822.3 481.5 829.8 487.3 837.3 493.1C845.2 499.2 854.1 505.5 862.2 512.0C870.1 518.4 878.0 525.3 885.9 532.2C893.8 539.1 901.7 546.0 909.6 553.5C917.5 561.0 927.0 569.7 933.3 577.2C938.0 582.8 943.0 591.7 947.5 598.5C951.7 604.9 955.9 609.8 960.1 617.8C964.8 626.7 971.8 641.1 975.8 652.1C978.7 659.9 982.0 673.6 984.4 683.6C986.3 691.7 988.7 703.2 990.2 712.3C991.3 719.0 992.5 727.5 993.6 738.0C994.8 749.0 996.1 764.7 997.3 778.1L1002.5 789.6C1003.3 780.1 1004.2 769.3 1005.0 761.0C1006.0 750.5 1007.5 735.4 1008.8 726.6C1010.4 715.6 1012.6 703.1 1014.5 695.1C1016.9 685.1 1020.2 673.3 1023.1 666.5C1026.9 657.4 1032.6 647.6 1037.4 640.7C1042.7 633.1 1049.0 626.3 1054.6 620.6C1060.1 615.0 1065.7 610.1 1071.2 606.3C1079.8 600.3 1095.0 590.5 1106.1 584.8C1116.6 579.4 1127.6 575.3 1137.6 572.0C1147.2 568.8 1156.7 567.2 1166.3 564.8" stroke="#ffa21a"/><path d="M305.2 480.8C327.0 479.1 351.1 477.4 370.5 475.6C387.4 474.0 404.4 472.2 421.3 469.9C440.8 467.3 469.3 463.3 487.5 460.0C501.8 457.4 518.4 453.1 530.5 449.9C540.3 447.3 553.2 443.0 560.0 440.8C563.7 439.6 567.4 438.3 571.1 436.8C578.6 433.8 595.0 427.7 604.7 422.6C612.8 418.3 622.3 411.5 629.1 406.0C634.6 401.5 640.9 395.2 645.7 389.5C649.8 384.6 654.3 378.2 658.1 371.8C661.6 366.0 665.4 358.9 668.5 351.1C671.3 344.2 674.9 331.6 676.8 325.2C677.9 321.6 678.9 317.0 680.0 312.6C681.2 307.6 682.7 301.1 684.0 295.3C685.5 289.0 687.3 279.6 688.7 274.6C689.9 270.3 691.1 268.6 692.3 265.6C692.9 268.6 693.4 271.8 694.0 274.6C694.8 278.7 696.2 285.1 697.3 289.9C698.8 296.2 700.9 305.2 702.7 312.6C704.8 321.2 707.6 333.3 710.0 341.8C712.6 350.8 715.5 359.1 718.2 366.7C721.0 374.3 723.8 381.1 726.5 387.4C729.1 393.4 732.0 400.0 734.2 404.4C736.1 408.2 738.1 410.8 740.0 413.6C743.2 418.1 748.8 426.3 753.2 431.6C760.1 439.9 772.1 453.9 781.6 463.5C791.9 473.9 805.5 486.0 814.8 494.3C822.3 501.0 829.8 506.9 837.3 513.3C845.2 520.0 854.1 527.7 862.2 534.6C870.1 541.3 878.0 547.5 885.9 554.8C893.8 562.1 903.9 572.6 909.6 578.5C913.1 582.1 916.5 585.9 920.0 590.1C924.1 595.1 929.5 602.3 934.3 608.7C939.1 615.1 943.8 621.6 948.6 628.7C953.4 635.9 958.7 644.9 963.0 651.6C966.8 657.5 971.3 664.7 974.4 668.8C976.8 671.9 979.5 674.6 981.6 676.0C983.5 677.3 985.4 677.5 987.3 677.4C989.2 677.3 991.1 677.1 993.0 675.4C995.6 673.0 999.7 666.9 1003.0 663.1C1007.1 658.4 1012.6 652.1 1017.4 647.3C1023.1 641.6 1030.7 634.2 1037.4 628.7C1044.1 623.2 1050.8 618.6 1057.5 614.4C1064.7 609.9 1072.8 604.8 1080.4 601.5C1090.9 597.0 1107.1 591.3 1120.5 587.2C1134.8 582.8 1151.0 579.0 1166.3 574.9" stroke="#d4188c"/><path d="M305.2 260.3C365.5 260.3 453.5 260.2 486.0 260.3C490.7 260.3 495.3 260.9 500.0 261.0C514.8 261.2 557.2 261.2 574.7 261.5C584.7 261.7 597.2 262.2 604.7 262.6C609.8 262.8 615.2 263.3 620.0 263.7C624.4 264.1 628.9 264.3 633.3 265.0C637.8 265.7 642.2 266.6 646.7 268.0C651.1 269.4 656.7 271.2 660.0 273.3C662.2 274.7 664.7 278.2 666.7 280.7C668.5 282.9 670.7 285.2 672.0 288.0C672.9 289.9 673.9 293.3 674.7 297.3C675.4 300.7 676.0 306.6 676.7 312.0C677.6 319.0 679.0 328.7 679.9 339.1C680.6 347.3 681.4 361.6 682.0 374.4C682.5 384.6 683.0 401.5 683.4 415.8C683.8 428.4 684.1 438.9 684.5 460.0C685.3 504.0 686.8 609.1 688.0 680.0C689.3 760.0 690.9 853.3 692.4 940.0C693.4 853.3 694.6 760.0 695.5 680.0C696.2 617.3 696.8 503.0 697.5 460.0C698.2 416.0 699.0 430.1 699.6 415.8C700.1 403.5 700.7 386.1 701.2 374.4C701.8 361.6 702.6 349.5 703.1 339.1C703.4 332.4 703.7 315.5 704.0 312.0C704.6 305.0 705.8 301.8 706.7 297.3C707.6 292.9 708.4 288.1 709.3 285.3C710.4 281.8 712.0 278.2 713.3 276.0C715.1 273.1 717.8 270.2 720.0 268.0C722.2 265.9 724.3 263.8 726.5 263.0C730.3 261.5 737.3 260.0 742.7 259.2C748.3 258.4 754.2 258.3 760.0 258.0C765.8 257.7 771.5 257.5 777.3 257.4C787.3 257.3 805.8 257.2 820.0 257.2C884.8 257.2 1050.9 257.5 1166.3 257.6" stroke="#2d67ad"/><path d="M305.2 480.2C327.0 478.5 351.1 476.8 370.5 475.0C387.4 473.4 404.4 471.6 421.3 469.3C440.8 466.7 469.3 462.7 487.5 459.4C501.8 456.8 518.4 452.5 530.5 449.3C540.3 446.7 553.2 442.4 560.0 440.2C563.7 439.0 567.4 437.7 571.1 436.2C578.6 433.2 595.0 427.1 604.7 422.0C612.8 417.7 622.3 410.9 629.1 405.4C634.6 400.9 640.9 394.6 645.7 388.9C649.8 384.0 654.3 377.6 658.1 371.2C661.6 365.4 665.4 358.3 668.5 350.5C671.3 343.6 674.9 331.0 676.8 324.6C677.9 321.0 678.9 316.4 680.0 312.0C681.2 307.0 682.7 300.5 684.0 294.7C685.5 288.4 687.3 278.9 688.7 274.0C689.9 269.7 691.1 268.0 692.3 265.0C692.9 268.0 693.4 271.2 694.0 274.0C694.8 278.1 696.2 284.5 697.3 289.3C698.8 295.6 700.9 304.6 702.7 312.0C704.8 320.6 707.6 332.7 710.0 341.2C712.6 350.2 715.5 358.5 718.2 366.1C721.0 373.7 723.8 380.5 726.5 386.8C729.1 392.8 732.0 399.4 734.2 403.8C736.1 407.6 738.1 410.2 740.0 413.0C743.2 417.5 748.8 425.7 753.2 431.0C760.1 439.3 772.1 453.3 781.6 462.9C791.9 473.3 805.5 485.4 814.8 493.7C822.3 500.4 829.8 506.3 837.3 512.7C845.2 519.4 854.1 527.1 862.2 534.0C870.1 540.7 878.0 546.9 885.9 554.2C893.8 561.5 903.9 572.2 909.6 577.9C913.1 581.4 916.5 584.7 920.0 588.6C924.1 593.2 929.5 599.4 934.3 605.8C939.1 612.2 943.8 619.7 948.6 627.3C953.4 634.9 958.5 641.8 963.0 651.6C967.3 660.8 972.2 675.0 975.8 686.0C978.7 694.8 982.2 709.4 984.4 717.5C985.8 722.9 987.3 730.9 988.7 734.7C990.2 738.8 992.0 739.4 993.6 741.8C995.3 736.6 997.1 731.5 998.8 726.1C1000.8 719.7 1003.5 709.8 1005.9 703.2C1009.0 694.6 1013.6 682.4 1017.4 674.5C1021.2 666.7 1025.0 661.2 1028.8 655.9C1033.6 649.2 1040.3 640.4 1046.0 634.5C1052.2 628.1 1059.4 621.5 1066.1 617.3C1075.6 611.3 1091.4 603.7 1103.3 598.7C1114.7 593.9 1127.1 590.3 1137.6 587.2C1147.2 584.4 1156.7 582.4 1166.3 580.0" stroke="#c5202e"/></g><path d="M1123 261.6 L1127 257.6 H1135.5 L1139.5 261.6Z" fill="#8fb0d8" stroke="#7ba0cc" stroke-width="0.6"/><path d="M1158.5 582.3 L1165.5 572 V582.3Z" fill="#e8b4bc" stroke="#c94a5c" stroke-width="1"/><path d="M304.75 255 V917.4" stroke="#1c1c1c" stroke-width="1.6"/><path d="M1166.25 255 V917.4" stroke="#1c1c1c" stroke-width="1.6"/><path d="M304 916.4 H1167" stroke="#727272" stroke-width="2.2"/><path d="M304 255.9 H1167" stroke="#1c1c1c" stroke-width="1.7"/><g fill="none" stroke-width="1.3"><path d="M688.4 255.4 V915.5" stroke="#1e8c1e" stroke-dasharray="7.5 8.5"/><path d="M305 274.0 H1166" stroke="#3a9d3a" stroke-dasharray="7.5 8.5" stroke-dashoffset="0.3"/><path d="M305 720.9 H1166" stroke="#3a9d3a" stroke-dasharray="7.5 8.5" stroke-dashoffset="0.3"/><path d="M994.1 256 V915.5" stroke="#ff9a30" stroke-dasharray="3.2 3.1" stroke-width="1"/><path d="M305 742.4 H1166" stroke="#ff9a30" stroke-dasharray="3.2 3.1" stroke-width="1"/><path d="M305 256.3 H1166" stroke="#ff9a30" stroke-dasharray="4.2 4.1" stroke-width="1.6"/></g></svg>
<div class="t" style="left:284.57px;top:250.16px;font-size:12.10px;line-height:12.10px;color:#383838;">0</div>
<div class="t" style="left:280.54px;top:286.76px;font-size:12.10px;line-height:12.10px;color:#383838;">-5</div>
<div class="t" style="left:273.81px;top:323.37px;font-size:12.10px;line-height:12.10px;color:#383838;">-10</div>
<div class="t" style="left:273.81px;top:359.97px;font-size:12.10px;line-height:12.10px;color:#383838;">-15</div>
<div class="t" style="left:273.81px;top:396.58px;font-size:12.10px;line-height:12.10px;color:#383838;">-20</div>
<div class="t" style="left:273.81px;top:433.19px;font-size:12.10px;line-height:12.10px;color:#383838;">-25</div>
<div class="t" style="left:273.81px;top:469.79px;font-size:12.10px;line-height:12.10px;color:#383838;">-30</div>
<div class="t" style="left:273.81px;top:506.40px;font-size:12.10px;line-height:12.10px;color:#383838;">-35</div>
<div class="t" style="left:273.81px;top:543.00px;font-size:12.10px;line-height:12.10px;color:#383838;">-40</div>
<div class="t" style="left:273.81px;top:579.61px;font-size:12.10px;line-height:12.10px;color:#383838;">-45</div>
<div class="t" style="left:273.81px;top:616.21px;font-size:12.10px;line-height:12.10px;color:#383838;">-50</div>
<div class="t" style="left:273.81px;top:652.82px;font-size:12.10px;line-height:12.10px;color:#383838;">-55</div>
<div class="t" style="left:273.81px;top:689.42px;font-size:12.10px;line-height:12.10px;color:#383838;">-60</div>
<div class="t" style="left:273.81px;top:726.03px;font-size:12.10px;line-height:12.10px;color:#383838;">-65</div>
<div class="t" style="left:273.81px;top:762.64px;font-size:12.10px;line-height:12.10px;color:#383838;">-70</div>
<div class="t" style="left:273.81px;top:799.24px;font-size:12.10px;line-height:12.10px;color:#383838;">-75</div>
<div class="t" style="left:273.81px;top:835.85px;font-size:12.10px;line-height:12.10px;color:#383838;">-80</div>
<div class="t" style="left:273.81px;top:872.45px;font-size:12.10px;line-height:12.10px;color:#383838;">-85</div>
<div class="t" style="left:273.81px;top:909.06px;font-size:12.10px;line-height:12.10px;color:#383838;">-90</div>
<div class="t" style="left:1179.60px;top:250.16px;font-size:12.10px;line-height:12.10px;color:#383838;">0</div>
<div class="t" style="left:1179.60px;top:286.76px;font-size:12.10px;line-height:12.10px;color:#383838;">-500m</div>
<div class="t" style="left:1179.60px;top:323.37px;font-size:12.10px;line-height:12.10px;color:#383838;">-1</div>
<div class="t" style="left:1179.60px;top:359.97px;font-size:12.10px;line-height:12.10px;color:#383838;">-1,5</div>
<div class="t" style="left:1179.60px;top:396.58px;font-size:12.10px;line-height:12.10px;color:#383838;">-2</div>
<div class="t" style="left:1179.60px;top:433.19px;font-size:12.10px;line-height:12.10px;color:#383838;">-2,5</div>
<div class="t" style="left:1179.60px;top:469.79px;font-size:12.10px;line-height:12.10px;color:#383838;">-3</div>
<div class="t" style="left:1179.60px;top:506.40px;font-size:12.10px;line-height:12.10px;color:#383838;">-3,5</div>
<div class="t" style="left:1179.60px;top:543.00px;font-size:12.10px;line-height:12.10px;color:#383838;">-4</div>
<div class="t" style="left:1179.60px;top:579.61px;font-size:12.10px;line-height:12.10px;color:#383838;">-4,5</div>
<div class="t" style="left:1179.60px;top:616.21px;font-size:12.10px;line-height:12.10px;color:#383838;">-5</div>
<div class="t" style="left:1179.60px;top:652.82px;font-size:12.10px;line-height:12.10px;color:#383838;">-5,5</div>
<div class="t" style="left:1179.60px;top:689.42px;font-size:12.10px;line-height:12.10px;color:#383838;">-6</div>
<div class="t" style="left:1179.60px;top:726.03px;font-size:12.10px;line-height:12.10px;color:#383838;">-6,5</div>
<div class="t" style="left:1179.60px;top:762.64px;font-size:12.10px;line-height:12.10px;color:#383838;">-7</div>
<div class="t" style="left:1179.60px;top:799.24px;font-size:12.10px;line-height:12.10px;color:#383838;">-7,5</div>
<div class="t" style="left:1179.60px;top:835.85px;font-size:12.10px;line-height:12.10px;color:#383838;">-8</div>
<div class="t" style="left:1179.60px;top:872.45px;font-size:12.10px;line-height:12.10px;color:#383838;">-8,5</div>
<div class="t" style="left:1179.60px;top:909.06px;font-size:12.10px;line-height:12.10px;color:#383838;">-9</div>
<div class="t" style="left:351.23px;top:926.16px;font-size:12.10px;line-height:12.10px;color:#383838;transform:scaleX(0.9504);transform-origin:0 0;">11,97M</div>
<div class="t" style="left:467.98px;top:926.16px;font-size:12.10px;line-height:12.10px;color:#383838;transform:scaleX(0.9504);transform-origin:0 0;">11,98M</div>
<div class="t" style="left:584.72px;top:926.16px;font-size:12.10px;line-height:12.10px;color:#383838;transform:scaleX(0.9504);transform-origin:0 0;">11,99M</div>
<div class="t" style="left:709.02px;top:926.16px;font-size:12.10px;line-height:12.10px;color:#383838;transform:scaleX(0.9517);transform-origin:0 0;">12M</div>
<div class="t" style="left:818.22px;top:926.16px;font-size:12.10px;line-height:12.10px;color:#383838;transform:scaleX(0.9292);transform-origin:0 0;">12,01M</div>
<div class="t" style="left:934.97px;top:926.16px;font-size:12.10px;line-height:12.10px;color:#383838;transform:scaleX(0.9292);transform-origin:0 0;">12,02M</div>
<div class="t" style="left:1051.72px;top:926.16px;font-size:12.10px;line-height:12.10px;color:#383838;transform:scaleX(0.9292);transform-origin:0 0;">12,03M</div>
<div class="t" style="left:683.20px;top:943.60px;font-size:15.00px;line-height:15.00px;color:#222;transform:scaleX(0.9995);transform-origin:0 0;">Frequency (Hz)</div>
<div class="t" style="left:250.9px;top:687.0px;font-size:15px;line-height:15px;color:#c23a4c;transform-origin:0 0;transform:rotate(-90deg) scaleX(1.0324);">Trace 1: Gain Magnitude (dB)</div>
<div class="t" style="left:1219.3px;top:707.0px;font-size:15px;line-height:15px;color:#4f7db6;transform-origin:0 0;transform:rotate(-90deg) scaleX(1.0447);">Trace 2: Reflection Magnitude (dB)</div>
<!-- p_right -->
<div class="a" style="left:1243.30px;top:143.50px;width:1.40px;height:852.00px;background:#5a8ccb;"></div>
<div class="a" style="left:1249.20px;top:148.50px;width:245.30px;height:164.80px;background:#fff;border:1.2px solid #141414;box-sizing:border-box;"></div>
<div class="a" style="left:1250.30px;top:149.70px;width:243.10px;height:19.20px;background:#b81226;"></div>
<svg class="a" style="left:1255.60px;top:152.80px;" width="11.4" height="11.4" viewBox="0 0 11.4 11.4"><rect x="0.5" y="0.5" width="10.4" height="10.4" fill="#fff" stroke="#d8d8d8" stroke-width="1"/><path d="M2.4 5.8 L4.6 8.2 L9 2.8" fill="none" stroke="#777" stroke-width="1.4"/></svg>
<div class="t" style="left:1272.90px;top:151.36px;font-size:13.40px;line-height:13.40px;color:#fff;transform:scaleX(0.8480);transform-origin:0 0;">Trace 1</div>
<svg class="a" style="left:1479.50px;top:155.50px;" width="11" height="7.5" viewBox="0 0 11 7.5"><path d="M1 1 L5.4 5.6 L9.8 1" fill="none" stroke="#fff" stroke-width="1.9"/></svg>
<div class="t" style="left:1255.80px;top:180.33px;font-size:12.60px;line-height:12.60px;color:#2c2c2c;transform:scaleX(0.9399);transform-origin:0 0;">Measurement</div>
<div class="a" style="left:1338.30px;top:174.10px;width:150.00px;height:22.80px;background:linear-gradient(#ffffff,#f3f3f3 55%,#e2e2e2);border:1px solid #a6a6a6;box-sizing:border-box;"></div>
<div class="t" style="left:1349.60px;top:178.30px;font-size:13.00px;line-height:13.00px;color:#1e1e1e;transform:scaleX(0.9250);transform-origin:0 0;">Gain</div>
<svg class="a" style="left:1472.80px;top:183.30px;" width="7.6" height="4.6" viewBox="0 0 7.6 4.6"><path d="M0 0 H7.6 L3.8 4.4Z" fill="#111"/></svg>
<div class="t" style="left:1255.80px;top:208.23px;font-size:12.60px;line-height:12.60px;color:#2c2c2c;transform:scaleX(0.9126);transform-origin:0 0;">Display</div>
<div class="a" style="left:1338.30px;top:202.00px;width:150.00px;height:22.80px;background:linear-gradient(#ffffff,#f3f3f3 55%,#e2e2e2);border:1px solid #a6a6a6;box-sizing:border-box;"></div>
<div class="t" style="left:1349.60px;top:206.20px;font-size:13.00px;line-height:13.00px;color:#1e1e1e;transform:scaleX(0.9865);transform-origin:0 0;">Measurement</div>
<svg class="a" style="left:1472.80px;top:211.20px;" width="7.6" height="4.6" viewBox="0 0 7.6 4.6"><path d="M0 0 H7.6 L3.8 4.4Z" fill="#111"/></svg>
<div class="t" style="left:1255.80px;top:235.93px;font-size:12.60px;line-height:12.60px;color:#2c2c2c;transform:scaleX(0.9323);transform-origin:0 0;">Format</div>
<div class="a" style="left:1338.30px;top:229.70px;width:150.00px;height:22.80px;background:linear-gradient(#ffffff,#f3f3f3 55%,#e2e2e2);border:1px solid #a6a6a6;box-sizing:border-box;"></div>
<div class="t" style="left:1349.60px;top:233.90px;font-size:13.00px;line-height:13.00px;color:#1e1e1e;transform:scaleX(0.9969);transform-origin:0 0;">Magnitude (dB)</div>
<svg class="a" style="left:1472.80px;top:238.90px;" width="7.6" height="4.6" viewBox="0 0 7.6 4.6"><path d="M0 0 H7.6 L3.8 4.4Z" fill="#111"/></svg>
<div class="a" style="left:1338.30px;top:257.30px;width:150.00px;height:22.40px;background:#fff;border:1px solid #a6a6a6;box-sizing:border-box;"></div>
<div class="t" style="left:1255.60px;top:262.63px;font-size:12.60px;line-height:12.60px;color:#1e1e1e;">Y</div>
<div class="t" style="left:1262.20px;top:266.93px;font-size:9.30px;line-height:9.30px;color:#1e1e1e;transform:scaleX(0.8823);transform-origin:0 0;">max</div>
<div class="t" style="left:1441.70px;top:260.60px;font-size:13.00px;line-height:13.00px;color:#1e1e1e;transform:scaleX(0.9835);transform-origin:0 0;">0 dB</div>
<svg class="a" style="left:1475.50px;top:261.30px;" width="8" height="4.4" viewBox="0 0 8 4.4"><path d="M0 4.2 H8 L4 0Z" fill="#111"/></svg>
<svg class="a" style="left:1475.50px;top:271.10px;" width="8" height="4.4" viewBox="0 0 8 4.4"><path d="M0 0 H8 L4 4.2Z" fill="#111"/></svg>
<div class="a" style="left:1338.30px;top:284.80px;width:150.00px;height:22.40px;background:#fff;border:1px solid #a6a6a6;box-sizing:border-box;"></div>
<div class="t" style="left:1255.60px;top:290.13px;font-size:12.60px;line-height:12.60px;color:#1e1e1e;">Y</div>
<div class="t" style="left:1262.20px;top:294.43px;font-size:9.30px;line-height:9.30px;color:#1e1e1e;transform:scaleX(0.9009);transform-origin:0 0;">min</div>
<div class="t" style="left:1430.50px;top:288.10px;font-size:13.00px;line-height:13.00px;color:#1e1e1e;transform:scaleX(0.9791);transform-origin:0 0;">-90 dB</div>
<svg class="a" style="left:1475.50px;top:288.80px;" width="8" height="4.4" viewBox="0 0 8 4.4"><path d="M0 4.2 H8 L4 0Z" fill="#111"/></svg>
<svg class="a" style="left:1475.50px;top:298.60px;" width="8" height="4.4" viewBox="0 0 8 4.4"><path d="M0 0 H8 L4 4.2Z" fill="#111"/></svg>
<div class="a" style="left:1249.20px;top:318.60px;width:245.30px;height:164.80px;background:#fff;border:1.2px solid #141414;box-sizing:border-box;"></div>
<div class="a" style="left:1250.30px;top:319.80px;width:243.10px;height:19.20px;background:#12549b;"></div>
<svg class="a" style="left:1255.60px;top:322.90px;" width="11.4" height="11.4" viewBox="0 0 11.4 11.4"><rect x="0.5" y="0.5" width="10.4" height="10.4" fill="#fff" stroke="#d8d8d8" stroke-width="1"/><path d="M2.4 5.8 L4.6 8.2 L9 2.8" fill="none" stroke="#777" stroke-width="1.4"/></svg>
<div class="t" style="left:1272.90px;top:321.46px;font-size:13.40px;line-height:13.40px;color:#fff;transform:scaleX(0.8480);transform-origin:0 0;">Trace 2</div>
<svg class="a" style="left:1479.50px;top:325.60px;" width="11" height="7.5" viewBox="0 0 11 7.5"><path d="M1 1 L5.4 5.6 L9.8 1" fill="none" stroke="#fff" stroke-width="1.9"/></svg>
<div class="t" style="left:1255.80px;top:350.43px;font-size:12.60px;line-height:12.60px;color:#2c2c2c;transform:scaleX(0.9399);transform-origin:0 0;">Measurement</div>
<div class="a" style="left:1338.30px;top:344.20px;width:150.00px;height:22.80px;background:linear-gradient(#ffffff,#f3f3f3 55%,#e2e2e2);border:1px solid #a6a6a6;box-sizing:border-box;"></div>
<div class="t" style="left:1349.60px;top:348.40px;font-size:13.00px;line-height:13.00px;color:#1e1e1e;transform:scaleX(0.9791);transform-origin:0 0;">Reflection</div>
<svg class="a" style="left:1472.80px;top:353.40px;" width="7.6" height="4.6" viewBox="0 0 7.6 4.6"><path d="M0 0 H7.6 L3.8 4.4Z" fill="#111"/></svg>
<div class="t" style="left:1255.80px;top:378.33px;font-size:12.60px;line-height:12.60px;color:#2c2c2c;transform:scaleX(0.9126);transform-origin:0 0;">Display</div>
<div class="a" style="left:1338.30px;top:372.10px;width:150.00px;height:22.80px;background:linear-gradient(#ffffff,#f3f3f3 55%,#e2e2e2);border:1px solid #a6a6a6;box-sizing:border-box;"></div>
<div class="t" style="left:1349.60px;top:376.30px;font-size:13.00px;line-height:13.00px;color:#1e1e1e;transform:scaleX(0.9865);transform-origin:0 0;">Measurement</div>
<svg class="a" style="left:1472.80px;top:381.30px;" width="7.6" height="4.6" viewBox="0 0 7.6 4.6"><path d="M0 0 H7.6 L3.8 4.4Z" fill="#111"/></svg>
<div class="t" style="left:1255.80px;top:406.03px;font-size:12.60px;line-height:12.60px;color:#2c2c2c;transform:scaleX(0.9323);transform-origin:0 0;">Format</div>
<div class="a" style="left:1338.30px;top:399.80px;width:150.00px;height:22.80px;background:linear-gradient(#ffffff,#f3f3f3 55%,#e2e2e2);border:1px solid #a6a6a6;box-sizing:border-box;"></div>
<div class="t" style="left:1349.60px;top:404.00px;font-size:13.00px;line-height:13.00px;color:#1e1e1e;transform:scaleX(0.9969);transform-origin:0 0;">Magnitude (dB)</div>
<svg class="a" style="left:1472.80px;top:409.00px;" width="7.6" height="4.6" viewBox="0 0 7.6 4.6"><path d="M0 0 H7.6 L3.8 4.4Z" fill="#111"/></svg>
<div class="a" style="left:1338.30px;top:427.40px;width:150.00px;height:22.40px;background:#fff;border:1px solid #a6a6a6;box-sizing:border-box;"></div>
<div class="t" style="left:1255.60px;top:432.73px;font-size:12.60px;line-height:12.60px;color:#1e1e1e;">Y</div>
<div class="t" style="left:1262.20px;top:437.03px;font-size:9.30px;line-height:9.30px;color:#1e1e1e;transform:scaleX(0.8823);transform-origin:0 0;">max</div>
<div class="t" style="left:1441.70px;top:430.70px;font-size:13.00px;line-height:13.00px;color:#1e1e1e;transform:scaleX(0.9835);transform-origin:0 0;">0 dB</div>
<svg class="a" style="left:1475.50px;top:431.40px;" width="8" height="4.4" viewBox="0 0 8 4.4"><path d="M0 4.2 H8 L4 0Z" fill="#111"/></svg>
<svg class="a" style="left:1475.50px;top:441.20px;" width="8" height="4.4" viewBox="0 0 8 4.4"><path d="M0 0 H8 L4 4.2Z" fill="#111"/></svg>
<div class="a" style="left:1338.30px;top:454.90px;width:150.00px;height:22.40px;background:#fff;border:1px solid #a6a6a6;box-sizing:border-box;"></div>
<div class="t" style="left:1255.60px;top:460.23px;font-size:12.60px;line-height:12.60px;color:#1e1e1e;">Y</div>
<div class="t" style="left:1262.20px;top:464.53px;font-size:9.30px;line-height:9.30px;color:#1e1e1e;transform:scaleX(0.9009);transform-origin:0 0;">min</div>
<div class="t" style="left:1437.60px;top:458.20px;font-size:13.00px;line-height:13.00px;color:#1e1e1e;transform:scaleX(0.9784);transform-origin:0 0;">-9 dB</div>
<svg class="a" style="left:1475.50px;top:458.90px;" width="8" height="4.4" viewBox="0 0 8 4.4"><path d="M0 4.2 H8 L4 0Z" fill="#111"/></svg>
<svg class="a" style="left:1475.50px;top:468.70px;" width="8" height="4.4" viewBox="0 0 8 4.4"><path d="M0 0 H8 L4 4.2Z" fill="#111"/></svg>
<div class="a" style="left:1249.40px;top:489.40px;width:245.00px;height:20.40px;background:#00c800;border:1px solid #0a0a0a;box-sizing:border-box;"></div>
<svg class="a" style="left:1255.60px;top:493.70px;" width="11.4" height="11.4" viewBox="0 0 11.4 11.4"><rect x="0.5" y="0.5" width="10.4" height="10.4" fill="#fff" stroke="#d8d8d8" stroke-width="1"/><path d="M2.4 5.8 L4.6 8.2 L9 2.8" fill="none" stroke="#777" stroke-width="1.4"/></svg>
<div class="t" style="left:1272.90px;top:492.26px;font-size:13.40px;line-height:13.40px;color:#fff;transform:scaleX(0.9586);transform-origin:0 0;">Memory 1</div>
<svg class="a" style="left:1336.00px;top:491.50px;" width="18" height="16" viewBox="0 0 18 16"><path d="M0.2 10.9 H17.6 V15.3 H0.2Z" fill="#fff"/><path d="M6.7 0.3 H10.9 V6.1 H14.5 L8.8 12.2 L3.1 6.1 H6.7Z" fill="#fff" stroke="#00c800" stroke-width="0.9"/><rect x="13.2" y="13.2" width="1.2" height="1" fill="#00c800"/><rect x="15.2" y="13.2" width="1.2" height="1" fill="#00c800"/></svg>
<svg class="a" style="left:1435.00px;top:490.60px;" width="15" height="16" viewBox="0 0 15 16"><path d="M5 2.6 Q5 0.6 7.8 0.6 Q10.6 0.6 10.6 2.6" fill="none" stroke="#fff" stroke-width="1.1"/><path d="M0.2 3 H14.4" stroke="#fff" stroke-width="1.3"/><path d="M1.9 3.2 V13.6 Q1.9 14.7 3 14.7 H11.6 Q12.7 14.7 12.7 13.6 V3.2" fill="none" stroke="#fff" stroke-width="1.3"/><path d="M4.7 6.2 V12 M7.3 6.2 V12 M9.9 6.2 V12" stroke="#fff" stroke-width="1.5" opacity="0.8"/></svg>
<svg class="a" style="left:1454.20px;top:490.80px;" width="17" height="17" viewBox="0 0 17 17"><path d="M4.3 8.9 L0.9 5.6 Q-0.2 3 1.6 1.6 Q3.8 -0.2 6.1 1.2 L9.3 4.6 M12 8.1 L15.4 11 Q16.4 13.4 14.6 14.9 Q12.4 16.6 10.4 15 L7.7 12.6" fill="none" stroke="#fff" stroke-width="1.5"/><path d="M10.1 0.6 L11.2 3.3 M15.2 1.2 L12.5 3.8 M16 5.5 H12.8 M0.3 10.5 H4 M1.1 14.8 L3.7 12.6 M5.3 15.6 L5.1 13.4" stroke="#fff" stroke-width="0.8" opacity="0.7"/></svg>
<svg class="a" style="left:1480.50px;top:494.60px;" width="8.5" height="10.4" viewBox="0 0 8.5 10.4"><path d="M1 0.9 L6.8 5 L1 9.1" fill="none" stroke="#fff" stroke-width="1.6"/></svg>
<div class="a" style="left:1249.40px;top:515.40px;width:245.00px;height:20.40px;background:#ffa500;border:1px solid #0a0a0a;box-sizing:border-box;"></div>
<svg class="a" style="left:1255.60px;top:519.70px;" width="11.4" height="11.4" viewBox="0 0 11.4 11.4"><rect x="0.5" y="0.5" width="10.4" height="10.4" fill="#fff" stroke="#d8d8d8" stroke-width="1"/><path d="M2.4 5.8 L4.6 8.2 L9 2.8" fill="none" stroke="#777" stroke-width="1.4"/></svg>
<div class="t" style="left:1272.90px;top:518.26px;font-size:13.40px;line-height:13.40px;color:#3a2600;transform:scaleX(0.9586);transform-origin:0 0;">Memory 2</div>
<svg class="a" style="left:1336.00px;top:517.50px;" width="18" height="16" viewBox="0 0 18 16"><path d="M0.2 10.9 H17.6 V15.3 H0.2Z" fill="#0a0800"/><path d="M6.7 0.3 H10.9 V6.1 H14.5 L8.8 12.2 L3.1 6.1 H6.7Z" fill="#0a0800" stroke="#ffa500" stroke-width="0.9"/><rect x="13.2" y="13.2" width="1.2" height="1" fill="#ffa500"/><rect x="15.2" y="13.2" width="1.2" height="1" fill="#ffa500"/></svg>
<svg class="a" style="left:1435.00px;top:516.60px;" width="15" height="16" viewBox="0 0 15 16"><path d="M5 2.6 Q5 0.6 7.8 0.6 Q10.6 0.6 10.6 2.6" fill="none" stroke="#0a0800" stroke-width="1.1"/><path d="M0.2 3 H14.4" stroke="#0a0800" stroke-width="1.3"/><path d="M1.9 3.2 V13.6 Q1.9 14.7 3 14.7 H11.6 Q12.7 14.7 12.7 13.6 V3.2" fill="none" stroke="#0a0800" stroke-width="1.3"/><path d="M4.7 6.2 V12 M7.3 6.2 V12 M9.9 6.2 V12" stroke="#0a0800" stroke-width="1.5" opacity="0.8"/></svg>
<svg class="a" style="left:1454.20px;top:516.80px;" width="17" height="17" viewBox="0 0 17 17"><path d="M4.3 8.9 L0.9 5.6 Q-0.2 3 1.6 1.6 Q3.8 -0.2 6.1 1.2 L9.3 4.6 M12 8.1 L15.4 11 Q16.4 13.4 14.6 14.9 Q12.4 16.6 10.4 15 L7.7 12.6" fill="none" stroke="#0a0800" stroke-width="1.5"/><path d="M10.1 0.6 L11.2 3.3 M15.2 1.2 L12.5 3.8 M16 5.5 H12.8 M0.3 10.5 H4 M1.1 14.8 L3.7 12.6 M5.3 15.6 L5.1 13.4" stroke="#0a0800" stroke-width="0.8" opacity="0.7"/></svg>
<svg class="a" style="left:1480.50px;top:520.60px;" width="8.5" height="10.4" viewBox="0 0 8.5 10.4"><path d="M1 0.9 L6.8 5 L1 9.1" fill="none" stroke="#0a0800" stroke-width="1.6"/></svg>
<div class="a" style="left:1249.40px;top:541.40px;width:245.00px;height:20.40px;background:#cc007a;border:1px solid #0a0a0a;box-sizing:border-box;"></div>
<svg class="a" style="left:1255.60px;top:545.70px;" width="11.4" height="11.4" viewBox="0 0 11.4 11.4"><rect x="0.5" y="0.5" width="10.4" height="10.4" fill="#fff" stroke="#d8d8d8" stroke-width="1"/><path d="M2.4 5.8 L4.6 8.2 L9 2.8" fill="none" stroke="#777" stroke-width="1.4"/></svg>
<div class="t" style="left:1272.90px;top:544.26px;font-size:13.40px;line-height:13.40px;color:#fff;transform:scaleX(0.9586);transform-origin:0 0;">Memory 3</div>
<svg class="a" style="left:1336.00px;top:543.50px;" width="18" height="16" viewBox="0 0 18 16"><path d="M0.2 10.9 H17.6 V15.3 H0.2Z" fill="#fff"/><path d="M6.7 0.3 H10.9 V6.1 H14.5 L8.8 12.2 L3.1 6.1 H6.7Z" fill="#fff" stroke="#cc007a" stroke-width="0.9"/><rect x="13.2" y="13.2" width="1.2" height="1" fill="#cc007a"/><rect x="15.2" y="13.2" width="1.2" height="1" fill="#cc007a"/></svg>
<svg class="a" style="left:1435.00px;top:542.60px;" width="15" height="16" viewBox="0 0 15 16"><path d="M5 2.6 Q5 0.6 7.8 0.6 Q10.6 0.6 10.6 2.6" fill="none" stroke="#fff" stroke-width="1.1"/><path d="M0.2 3 H14.4" stroke="#fff" stroke-width="1.3"/><path d="M1.9 3.2 V13.6 Q1.9 14.7 3 14.7 H11.6 Q12.7 14.7 12.7 13.6 V3.2" fill="none" stroke="#fff" stroke-width="1.3"/><path d="M4.7 6.2 V12 M7.3 6.2 V12 M9.9 6.2 V12" stroke="#fff" stroke-width="1.5" opacity="0.8"/></svg>
<svg class="a" style="left:1454.20px;top:542.80px;" width="17" height="17" viewBox="0 0 17 17"><path d="M4.3 8.9 L0.9 5.6 Q-0.2 3 1.6 1.6 Q3.8 -0.2 6.1 1.2 L9.3 4.6 M12 8.1 L15.4 11 Q16.4 13.4 14.6 14.9 Q12.4 16.6 10.4 15 L7.7 12.6" fill="none" stroke="#fff" stroke-width="1.5"/><path d="M10.1 0.6 L11.2 3.3 M15.2 1.2 L12.5 3.8 M16 5.5 H12.8 M0.3 10.5 H4 M1.1 14.8 L3.7 12.6 M5.3 15.6 L5.1 13.4" stroke="#fff" stroke-width="0.8" opacity="0.7"/></svg>
<svg class="a" style="left:1480.50px;top:546.60px;" width="8.5" height="10.4" viewBox="0 0 8.5 10.4"><path d="M1 0.9 L6.8 5 L1 9.1" fill="none" stroke="#fff" stroke-width="1.6"/></svg>
<div class="a" style="left:1249.40px;top:567.40px;width:245.00px;height:20.40px;background:#f5e400;border:1px solid #0a0a0a;box-sizing:border-box;"></div>
<svg class="a" style="left:1255.60px;top:571.70px;" width="11.4" height="11.4" viewBox="0 0 11.4 11.4"><rect x="0.5" y="0.5" width="10.4" height="10.4" fill="#fff" stroke="#d8d8d8" stroke-width="1"/><path d="M2.4 5.8 L4.6 8.2 L9 2.8" fill="none" stroke="#777" stroke-width="1.4"/></svg>
<div class="t" style="left:1272.90px;top:570.26px;font-size:13.40px;line-height:13.40px;color:#332f00;transform:scaleX(0.9586);transform-origin:0 0;">Memory 4</div>
<svg class="a" style="left:1336.00px;top:569.50px;" width="18" height="16" viewBox="0 0 18 16"><path d="M0.2 10.9 H17.6 V15.3 H0.2Z" fill="#0a0a00"/><path d="M6.7 0.3 H10.9 V6.1 H14.5 L8.8 12.2 L3.1 6.1 H6.7Z" fill="#0a0a00" stroke="#f5e400" stroke-width="0.9"/><rect x="13.2" y="13.2" width="1.2" height="1" fill="#f5e400"/><rect x="15.2" y="13.2" width="1.2" height="1" fill="#f5e400"/></svg>
<svg class="a" style="left:1435.00px;top:568.60px;" width="15" height="16" viewBox="0 0 15 16"><path d="M5 2.6 Q5 0.6 7.8 0.6 Q10.6 0.6 10.6 2.6" fill="none" stroke="#0a0a00" stroke-width="1.1"/><path d="M0.2 3 H14.4" stroke="#0a0a00" stroke-width="1.3"/><path d="M1.9 3.2 V13.6 Q1.9 14.7 3 14.7 H11.6 Q12.7 14.7 12.7 13.6 V3.2" fill="none" stroke="#0a0a00" stroke-width="1.3"/><path d="M4.7 6.2 V12 M7.3 6.2 V12 M9.9 6.2 V12" stroke="#0a0a00" stroke-width="1.5" opacity="0.8"/></svg>
<svg class="a" style="left:1454.20px;top:568.80px;" width="17" height="17" viewBox="0 0 17 17"><path d="M4.3 8.9 L0.9 5.6 Q-0.2 3 1.6 1.6 Q3.8 -0.2 6.1 1.2 L9.3 4.6 M12 8.1 L15.4 11 Q16.4 13.4 14.6 14.9 Q12.4 16.6 10.4 15 L7.7 12.6" fill="none" stroke="#0a0a00" stroke-width="1.5"/><path d="M10.1 0.6 L11.2 3.3 M15.2 1.2 L12.5 3.8 M16 5.5 H12.8 M0.3 10.5 H4 M1.1 14.8 L3.7 12.6 M5.3 15.6 L5.1 13.4" stroke="#0a0a00" stroke-width="0.8" opacity="0.7"/></svg>
<svg class="a" style="left:1480.50px;top:572.60px;" width="8.5" height="10.4" viewBox="0 0 8.5 10.4"><path d="M1 0.9 L6.8 5 L1 9.1" fill="none" stroke="#0a0a00" stroke-width="1.6"/></svg>
<div class="a" style="left:1249.40px;top:968.60px;width:245.00px;height:21.00px;background:linear-gradient(#fdfdfd,#f1f1f1 55%,#dfdfdf);border:1px solid #bdbdbd;box-sizing:border-box;"></div>
<div class="t" style="left:1285.60px;top:973.00px;font-size:13.00px;line-height:13.00px;color:#1e1e1e;transform:scaleX(0.9752);transform-origin:0 0;">Measurement</div>
<svg class="a" style="left:1368.50px;top:974.00px;" width="13" height="9" viewBox="0 0 13 9"><path d="M0.5 4.5 H11.5 M7.5 0.8 L11.5 4.5 L7.5 8.2" fill="none" stroke="#1e1e1e" stroke-width="1.3"/></svg>
<div class="t" style="left:1385.00px;top:973.00px;font-size:13.00px;line-height:13.00px;color:#1e1e1e;transform:scaleX(0.9946);transform-origin:0 0;">new memory</div>
<svg class="a" style="left:1450.00px;top:812.00px;" width="14" height="21" viewBox="0 0 14 21"><path d="M1.2 1.3 V17.6 L5.5 14 L7.8 19 Q9 20.2 10.5 19 L8.6 13.4 L12.8 13 Z" fill="#fff" stroke="#111" stroke-width="1.1" stroke-linejoin="round"/></svg>
<!-- p_status -->
<div class="a" style="left:0.00px;top:995.20px;width:1500.00px;height:18.00px;background:#12549b;"></div>
<div class="a" style="left:978.00px;top:997.80px;width:75.00px;height:13.60px;background:#454545;border:1px solid #c9c9c9;box-sizing:border-box;"></div>
<div class="t" style="left:994.40px;top:998.30px;font-size:13.00px;line-height:13.00px;color:#e4e4e4;transform:scaleX(0.9693);transform-origin:0 0;">Auto off</div>
<div class="a" style="left:1069.00px;top:997.80px;width:75.50px;height:13.60px;background:#454545;border:1px solid #c9c9c9;box-sizing:border-box;"></div>
<div class="t" style="left:1077.60px;top:998.30px;font-size:13.00px;line-height:13.00px;color:#e4e4e4;transform:scaleX(0.9142);transform-origin:0 0;">Receiver 1</div>
<div class="a" style="left:1144.00px;top:997.80px;width:25.00px;height:13.60px;background:#454545;border:1px solid #c9c9c9;box-sizing:border-box;"></div>
<div class="a" style="left:1171.00px;top:997.80px;width:75.60px;height:13.60px;background:#454545;border:1px solid #c9c9c9;box-sizing:border-box;"></div>
<div class="t" style="left:1179.60px;top:998.30px;font-size:13.00px;line-height:13.00px;color:#e4e4e4;transform:scaleX(0.9238);transform-origin:0 0;">Receiver 2</div>
<div class="a" style="left:1246.20px;top:997.80px;width:25.00px;height:13.60px;background:#454545;border:1px solid #c9c9c9;box-sizing:border-box;"></div>
<div class="a" style="left:1060.20px;top:998.30px;width:1.80px;height:12.80px;background:#ececec;"></div>
<div class="a" style="left:1277.60px;top:998.30px;width:1.80px;height:12.80px;background:#ececec;"></div>
<div class="a" style="left:1380.20px;top:998.30px;width:1.80px;height:12.80px;background:#ececec;"></div>
<svg class="a" style="left:1286.00px;top:997.60px;" width="16.4" height="11.8" viewBox="0 0 16.4 11.8"><path d="M0.3 11.6 V2.2 L2.4 0.2 V7.4 H3.6 L5.2 0.2 H7.6 L8.6 7.4 H16.2 V11.6Z" fill="#fff"/><path d="M3.4 9.6 H14.6" stroke="#12549b" stroke-width="0.9" stroke-dasharray="1 0.9"/></svg>
<div class="t" style="left:1307.40px;top:997.96px;font-size:13.40px;line-height:13.40px;color:#fff;transform:scaleX(0.9571);transform-origin:0 0;-webkit-text-stroke:0.25px #fff;">2017-05-22</div>
<div class="t" style="left:1388.40px;top:997.96px;font-size:13.40px;line-height:13.40px;color:#fff;transform:scaleX(0.8727);transform-origin:0 0;-webkit-text-stroke:0.25px #fff;">JA752C</div>
<div class="a" style="left:1449.00px;top:1004.00px;width:14.00px;height:1.00px;background:#19a319;"></div>
<svg class="a" style="left:1436.00px;top:996.90px;" width="15" height="15" viewBox="0 0 15 15"><circle cx="7.5" cy="7.5" r="7.3" fill="#12a312"/><path d="M4.2 7.6 L6.6 10 L10.8 5.2" fill="none" stroke="#fff" stroke-width="1.7"/></svg>
<div class="a" style="left:1462.40px;top:1000.40px;width:32.60px;height:8.40px;background:#12549b;border:1px solid #8fb0dc;box-sizing:border-box;"></div>
<svg class="a" style="left:1488.00px;top:1002.40px;" width="6.4" height="6" viewBox="0 0 6.4 6"><path d="M6.4 0 V6 H0Z" fill="#d0142c"/></svg>
<!-- frame --><div class="a" style="left:0;top:0;width:1498px;height:1011px;border:1px solid #12549b;pointer-events:none"></div><div class="a" style="left:1498.4px;top:0;width:1.6px;height:1013px;background:#12549b"></div><svg class="a" style="left:0;top:0" width="1500" height="1013" viewBox="0 0 1500 1013"><path d="M0 0 H7 A8 8 0 0 0 0 6.5Z M1500 0 V6.5 A8 8 0 0 0 1493 0Z M0 1013 V1006.5 A8 8 0 0 0 7 1013Z M1500 1013 H1493 A8 8 0 0 0 1500 1006.5Z" fill="#000"/></svg>
</body></html>
